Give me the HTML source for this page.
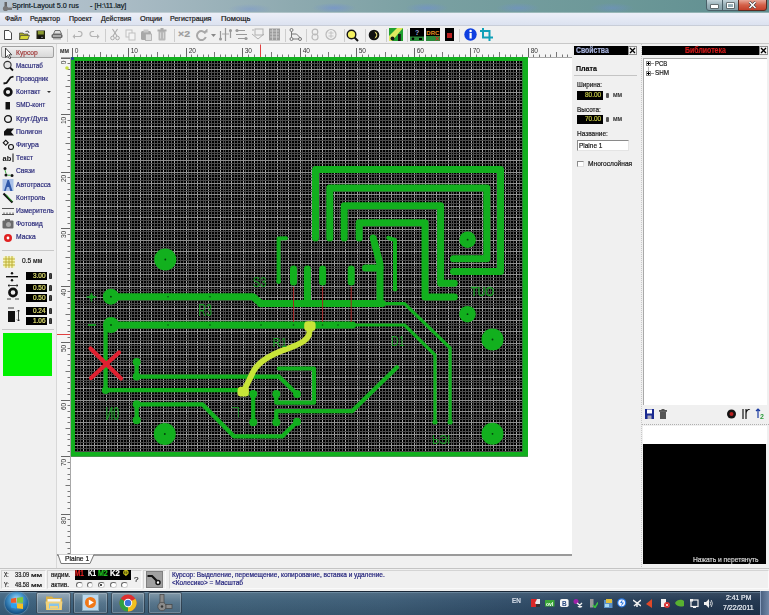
<!DOCTYPE html><html><head><meta charset="utf-8"><style>
*{margin:0;padding:0;box-sizing:border-box}
html,body{width:769px;height:615px;overflow:hidden;background:#f0f0f0;font-family:"Liberation Sans",sans-serif;}
.a{position:absolute}
.t{position:absolute;white-space:nowrap;line-height:1;-webkit-text-stroke:0.2px currentColor}
svg{display:block}
</style></head><body><div id="root" style="position:absolute;left:0;top:0;width:769px;height:615px;overflow:hidden;filter:blur(0.35px)">
<div class="a" style="left:0;top:0;width:769px;height:13px;background:linear-gradient(90deg,#b6c4d0 0%,#abbcc6 15%,#8eaab0 38%,#7aa0a2 55%,#6c9898 80%,#5f8e90 100%)"></div>
<div class="a" style="left:0;top:0;width:769px;height:12px;background:radial-gradient(ellipse 22px 5px at 334px 8px,rgba(110,140,220,.55),transparent),radial-gradient(ellipse 22px 5px at 427px 8px,rgba(110,140,220,.5),transparent),radial-gradient(ellipse 22px 5px at 518px 8px,rgba(110,140,220,.45),transparent),radial-gradient(ellipse 22px 5px at 612px 8px,rgba(110,140,220,.4),transparent),radial-gradient(ellipse 22px 5px at 250px 9px,rgba(110,140,220,.35),transparent)"></div>
<div class="a" style="left:0;top:12px;width:769px;height:1px;background:rgba(255,255,255,.3)"></div>
<div class="a" style="left:1px;top:2px;width:12px;height:10px"><svg width="12" height="10" viewBox="0 0 12 10"><rect x="3.5" y="0" width="2.5" height="5" fill="#666"/><circle cx="4.5" cy="6.5" r="2.6" fill="#777"/><rect x="6" y="5.5" width="5" height="2.5" fill="#777"/></svg></div>
<div class="t" style="left:12.40px;top:2.03px;font-size:7.80px;color:#0e1a24;transform:scaleX(0.923);transform-origin:0 0;">Sprint-Layout 5.0 rus</div>
<div class="t" style="left:90.10px;top:2.03px;font-size:7.80px;color:#0e1a24;transform:scaleX(0.926);transform-origin:0 0;">- [H:\11.lay]</div>
<div class="a" style="left:705.5px;top:-1px;width:17px;height:11.5px;border:1px solid #4a6068;border-radius:0 0 0 3px;background:linear-gradient(180deg,#c4d4da,#98b0b8 50%,#85a0a8)"></div>
<div class="a" style="left:710.5px;top:5px;width:7px;height:2.5px;background:#fff;box-shadow:0 0 0 .6px #444"></div>
<div class="a" style="left:721.5px;top:-1px;width:17px;height:11.5px;border:1px solid #4a6068;background:linear-gradient(180deg,#c4d4da,#98b0b8 50%,#85a0a8)"></div>
<div class="a" style="left:726.5px;top:2.5px;width:7px;height:5.5px;border:1.4px solid #fff;box-shadow:0 0 0 .6px #444"></div>
<div class="a" style="left:737.5px;top:-1px;width:29.5px;height:11.5px;border:1px solid #5a2a20;border-radius:0 0 3px 0;background:linear-gradient(180deg,#e8a898,#d46048 50%,#c4402a)"></div>
<div class="a" style="left:747px;top:1px;width:11px;height:8px"><svg width="11" height="8"><path d="M2.5 1l6 6M8.5 1l-6 6" stroke="#333" stroke-width="2.6"/><path d="M2.5 1l6 6M8.5 1l-6 6" stroke="#fff" stroke-width="1.6"/></svg></div>
<div class="a" style="left:0;top:13px;width:769px;height:13px;background:linear-gradient(180deg,#eceff8,#dce2f0);border-bottom:1px solid #c8cdd8"></div>
<div class="t" style="left:4.60px;top:14.96px;font-size:7.40px;color:#151515;transform:scaleX(0.929);transform-origin:0 0;">Файл</div>
<div class="t" style="left:30.00px;top:14.96px;font-size:7.40px;color:#151515;transform:scaleX(0.945);transform-origin:0 0;">Редактор</div>
<div class="t" style="left:68.80px;top:14.96px;font-size:7.40px;color:#151515;transform:scaleX(0.948);transform-origin:0 0;">Проект</div>
<div class="t" style="left:100.70px;top:14.96px;font-size:7.40px;color:#151515;transform:scaleX(0.938);transform-origin:0 0;">Действия</div>
<div class="t" style="left:140.00px;top:14.96px;font-size:7.40px;color:#151515;">Опции</div>
<div class="t" style="left:170.40px;top:14.96px;font-size:7.40px;color:#151515;transform:scaleX(0.959);transform-origin:0 0;">Регистрация</div>
<div class="t" style="left:220.70px;top:14.96px;font-size:7.40px;color:#151515;transform:scaleX(1.032);transform-origin:0 0;">Помощь</div>
<div class="a" style="left:0;top:26px;width:769px;height:17.5px;background:#f0f0f0"></div>
<div class="a" style="left:0;top:43px;width:769px;height:1px;background:#c8c8c8"></div>
<div class="a" style="left:66.5px;top:28.5px;width:1px;height:13px;background:#cdcdcd"></div>
<div class="a" style="left:104.5px;top:28.5px;width:1px;height:13px;background:#cdcdcd"></div>
<div class="a" style="left:173.5px;top:28.5px;width:1px;height:13px;background:#cdcdcd"></div>
<div class="a" style="left:285px;top:28.5px;width:1px;height:13px;background:#cdcdcd"></div>
<div class="a" style="left:306px;top:28.5px;width:1px;height:13px;background:#cdcdcd"></div>
<div class="a" style="left:343.5px;top:28.5px;width:1px;height:13px;background:#cdcdcd"></div>
<div class="a" style="left:364.5px;top:28.5px;width:1px;height:13px;background:#cdcdcd"></div>
<div class="a" style="left:385.5px;top:28.5px;width:1px;height:13px;background:#cdcdcd"></div>
<div class="a" style="left:406.5px;top:28.5px;width:1px;height:13px;background:#cdcdcd"></div>
<div class="a" style="left:459px;top:28.5px;width:1px;height:13px;background:#cdcdcd"></div>
<div class="a" style="left:3px;top:30px;width:10px;height:10px"><svg width="10" height="10" viewBox="0 0 10 10"><path d="M1.5 .5h4.5l2.5 2.5v6.5h-7z" fill="#fff" stroke="#333" stroke-width=".9"/></svg></div>
<div class="a" style="left:18.5px;top:29.5px;width:11px;height:10px"><svg width="11" height="10" viewBox="0 0 11 10"><path d="M0.5 3h3.5l1 1h4v5.5h-8.5z" fill="#a8a828" stroke="#444" stroke-width=".7"/><path d="M1.5 5.5h9l-1.8 4h-8.2z" fill="#d8d838" stroke="#444" stroke-width=".7"/><path d="M6.5 1.5l2.5-.5 1 2" fill="none" stroke="#333" stroke-width=".8"/></svg></div>
<div class="a" style="left:35.5px;top:30px;width:10px;height:10px"><svg width="10" height="10" viewBox="0 0 10 10"><rect x=".5" y=".5" width="8.5" height="8.5" fill="#202010"/><rect x="1.8" y="1" width="6" height="3.5" fill="#8a9a30"/><rect x="2.5" y="6" width="4.5" height="3" fill="#111"/><rect x="5.5" y="6.8" width="1" height="1.2" fill="#ddd"/></svg></div>
<div class="a" style="left:51px;top:29.5px;width:12px;height:10px"><svg width="12" height="10" viewBox="0 0 12 10"><path d="M2.5 4l1.5-3.5h5l1.5 3.5z" fill="#ddd" stroke="#555" stroke-width=".8"/><rect x="0.5" y="4" width="11" height="4" rx="1.5" fill="#666"/><rect x="2" y="5.5" width="8" height="1" fill="#eee"/><rect x="2" y="8" width="8" height="1.5" fill="#aaa"/></svg></div>
<div class="a" style="left:72px;top:30px;width:11px;height:10px"><svg width="11" height="10" viewBox="0 0 11 10"><path d="M2.5 6.5 h5 a2.5 2.5 0 0 0 0 -5 h-1.5" fill="none" stroke="#b4b4b4" stroke-width="1.2"/><path d="M0.5 6.5l2.5-2.5v5z" fill="#b4b4b4"/></svg></div>
<div class="a" style="left:89px;top:30px;width:11px;height:10px"><svg width="11" height="10" viewBox="0 0 11 10"><path d="M8.5 6.5 h-5 a2.5 2.5 0 0 1 0 -5 h1.5" fill="none" stroke="#b4b4b4" stroke-width="1.2"/><path d="M10.5 6.5l-2.5-2.5v5z" fill="#b4b4b4"/></svg></div>
<div class="a" style="left:110px;top:28px;width:10px;height:13px"><svg width="10" height="13" viewBox="0 0 10 13"><path d="M2.5 1l4.5 7M7.5 1l-4.5 7" stroke="#aaa" stroke-width="1.1"/><circle cx="2.5" cy="10" r="1.8" fill="none" stroke="#aaa"/><circle cx="7.5" cy="10" r="1.8" fill="none" stroke="#aaa"/></svg></div>
<div class="a" style="left:125px;top:29px;width:11px;height:12px"><svg width="11" height="12" viewBox="0 0 11 12"><rect x="1" y="1" width="6" height="7" fill="#f4f4f4" stroke="#c0c0c0"/><rect x="4" y="4" width="6" height="7" fill="#f4f4f4" stroke="#c0c0c0"/></svg></div>
<div class="a" style="left:140px;top:29px;width:12px;height:12px"><svg width="12" height="12" viewBox="0 0 12 12"><rect x="1" y="2" width="10" height="9" rx="1.5" fill="#a8a8a8"/><rect x="3.5" y="0.5" width="5" height="3" fill="#c8c8c8"/><rect x="5.5" y="5" width="6" height="6.5" fill="#ddd" stroke="#aaa" stroke-width=".8"/></svg></div>
<div class="a" style="left:157px;top:28px;width:10px;height:13px"><svg width="10" height="13" viewBox="0 0 10 13"><rect x="1.5" y="3" width="7" height="9.5" rx="1" fill="#b8b8b8"/><rect x="0.5" y="1.5" width="9" height="2" fill="#aaa"/><rect x="3.5" y="0" width="3" height="2" fill="#aaa"/><path d="M3.5 4.5v6M6.5 4.5v6" stroke="#ddd" stroke-width=".8"/></svg></div>
<div class="t" style="left:177.50px;top:29.96px;font-size:9.00px;color:#9c9c9c;font-weight:bold;transform:scaleX(1.169);transform-origin:0 0;">×2</div>
<div class="a" style="left:195px;top:29px;width:13px;height:12px"><svg width="13" height="12" viewBox="0 0 13 12"><path d="M10.5 4.5A4.5 4.5 0 1 0 10.8 8" fill="none" stroke="#a8a8a8" stroke-width="2"/><path d="M8 3.5h4.5v-4z" fill="#a8a8a8"/></svg></div>
<div class="a" style="left:211px;top:33.5px;width:6px;height:4px"><svg width="6" height="4" viewBox="0 0 6 4"><path d="M0 0h5l-2.5 3z" fill="#888"/></svg></div>
<div class="a" style="left:219px;top:28px;width:13px;height:13px"><svg width="13" height="13" viewBox="0 0 13 13"><path d="M1.5 3v8M11.5 2v8M6.5 0v13" stroke="#999" stroke-width="1.2"/><circle cx="1.5" cy="11" r="1.5" fill="#999"/><circle cx="11.5" cy="2.5" r="1.5" fill="#999"/><path d="M3 6h7" stroke="#999" stroke-width=".8"/></svg></div>
<div class="a" style="left:235px;top:28px;width:13px;height:13px"><svg width="13" height="13" viewBox="0 0 13 13"><path d="M3 2.5h7M3 10.5h7M1 6.5h11" stroke="#999" stroke-width="1.2"/><circle cx="2" cy="2.5" r="1.6" fill="#999"/><circle cx="11" cy="10.5" r="1.6" fill="#999"/></svg></div>
<div class="a" style="left:251px;top:28px;width:14px;height:13px"><svg width="14" height="13" viewBox="0 0 14 13"><rect x="4" y="1" width="8" height="6" fill="none" stroke="#b0b0b0"/><path d="M1 6l6 5 6-5" fill="none" stroke="#b0b0b0"/><path d="M1 2h2" stroke="#b0b0b0"/></svg></div>
<div class="a" style="left:268px;top:28px;width:13px;height:13px"><svg width="13" height="13" viewBox="0 0 13 13"><rect x="1" y="0.5" width="11" height="12" fill="#9c9c9c"/><path d="M2 3h9M2 6h9M2 9h9M4.5 1v11M8.5 1v11" stroke="#d0d0d0" stroke-width=".8"/></svg></div>
<div class="a" style="left:289px;top:28px;width:13px;height:13px"><svg width="13" height="13" viewBox="0 0 13 13"><circle cx="2.5" cy="2" r="1.5" fill="none" stroke="#777"/><circle cx="2.5" cy="11" r="1.5" fill="none" stroke="#777"/><circle cx="11" cy="11" r="1.5" fill="none" stroke="#777"/><path d="M2.5 3.5v6M4 11h5.5M2.5 6h5l3.5 3.5" fill="none" stroke="#777"/></svg></div>
<div class="a" style="left:309px;top:28px;width:12px;height:13px"><svg width="12" height="13" viewBox="0 0 12 13"><circle cx="6" cy="4" r="2.8" fill="none" stroke="#bbb" stroke-width="1.2"/><circle cx="6" cy="9" r="3" fill="none" stroke="#bbb" stroke-width="1.2"/></svg></div>
<div class="a" style="left:325px;top:28px;width:12px;height:13px"><svg width="12" height="13" viewBox="0 0 12 13"><circle cx="6" cy="6.5" r="5" fill="none" stroke="#bbb" stroke-width="1.2"/><path d="M3.5 5h5M3.5 8h5M6 3v7" stroke="#bbb" stroke-width=".8"/></svg></div>
<div class="a" style="left:346px;top:28.5px;width:13px;height:13px"><svg width="13" height="13" viewBox="0 0 13 13"><circle cx="5.5" cy="5.5" r="4.3" fill="#f4f060" stroke="#141414" stroke-width="1.4"/><path d="M8.5 8.5l3.5 3.5" stroke="#141414" stroke-width="2"/></svg></div>
<div class="a" style="left:368px;top:29px;width:12px;height:12px"><svg width="12" height="12" viewBox="0 0 12 12"><circle cx="6" cy="6" r="5.3" fill="#111"/><path d="M6.5 2.5 A3.6 3.6 0 0 1 6.5 9.5 L8.5 6z" fill="#f4e878"/></svg></div>
<div class="a" style="left:389px;top:28px;width:14px;height:13px"><svg width="14" height="13" viewBox="0 0 14 13"><rect x="0" y="0" width="14" height="13" fill="#20a030"/><path d="M0 8l8-8h6L3 13H0z" fill="#e0e860"/><rect x="9" y="6" width="2.8" height="7" fill="#141414"/><circle cx="3.5" cy="10.5" r="2" fill="#141414"/></svg></div>
<div class="a" style="left:410px;top:28px;width:14px;height:13px"><svg width="14" height="13" viewBox="0 0 14 13"><rect x="0" y="0" width="14" height="13" fill="#000"/><rect x="0" y="8.5" width="14" height="4.5" fill="#2a8a3a"/><text x="5" y="7" font-size="7" fill="#9ad" font-family="Liberation Sans" font-weight="bold">?</text><circle cx="3" cy="10.8" r="1.3" fill="#000"/><rect x="9" y="10" width="3" height="2" fill="#000"/></svg></div>
<div class="a" style="left:426px;top:28px;width:14px;height:13px"><svg width="14" height="13" viewBox="0 0 14 13"><rect x="0" y="0" width="14" height="13" fill="#000"/><text x="0.3" y="6.5" font-size="6" fill="#e89020" font-family="Liberation Sans" font-weight="bold">DRC</text><rect x="0" y="8" width="14" height="5" fill="#2a8a3a"/><path d="M9.5 8.5l3.5 4M13 8.5l-3.5 4" stroke="#e02020"/></svg></div>
<div class="a" style="left:445px;top:28px;width:9px;height:13px"><svg width="9" height="13" viewBox="0 0 9 13"><rect x="0" y="0" width="9" height="13" fill="#000"/><rect x="2" y="5" width="5" height="5" fill="#b82020"/></svg></div>
<div class="a" style="left:464px;top:28px;width:13px;height:13px"><svg width="13" height="13" viewBox="0 0 13 13"><circle cx="6.5" cy="6.5" r="6.2" fill="#1040e0"/><rect x="5.5" y="5" width="2.2" height="5.5" fill="#fff"/><circle cx="6.6" cy="3" r="1.3" fill="#fff"/></svg></div>
<div class="a" style="left:480px;top:28px;width:13px;height:13px"><svg width="13" height="13" viewBox="0 0 13 13"><path d="M3 0v9.5h10M0 3h9.5v10" fill="none" stroke="#10a0b8" stroke-width="2"/></svg></div>
<div class="a" style="left:56px;top:44px;width:1px;height:524px;background:#d8d8d8"></div>
<div class="a" style="left:1.3px;top:46.4px;width:52.7px;height:11.6px;border:1px solid #a0a0a0;border-radius:2px;background:linear-gradient(180deg,#f0f0f0,#d8d8d8)"></div>
<div class="t" style="left:16.10px;top:48.66px;font-size:7.40px;color:#a03838;transform:scaleX(0.906);transform-origin:0 0;">Курсор</div>
<div class="t" style="left:16.10px;top:61.86px;font-size:7.40px;color:#2a2a7a;transform:scaleX(0.847);transform-origin:0 0;">Масштаб</div>
<div class="t" style="left:16.10px;top:75.06px;font-size:7.40px;color:#2a2a7a;transform:scaleX(0.867);transform-origin:0 0;">Проводник</div>
<div class="t" style="left:16.10px;top:88.26px;font-size:7.40px;color:#2a2a7a;transform:scaleX(0.912);transform-origin:0 0;">Контакт</div>
<div class="t" style="left:16.10px;top:101.46px;font-size:7.40px;color:#2a2a7a;transform:scaleX(0.866);transform-origin:0 0;">SMD-конт</div>
<div class="t" style="left:16.10px;top:114.66px;font-size:7.40px;color:#2a2a7a;transform:scaleX(0.981);transform-origin:0 0;">Круг/Дуга</div>
<div class="t" style="left:16.10px;top:127.86px;font-size:7.40px;color:#2a2a7a;transform:scaleX(0.910);transform-origin:0 0;">Полигон</div>
<div class="t" style="left:16.10px;top:141.06px;font-size:7.40px;color:#2a2a7a;transform:scaleX(0.942);transform-origin:0 0;">Фигура</div>
<div class="t" style="left:16.10px;top:154.26px;font-size:7.40px;color:#2a2a7a;transform:scaleX(0.912);transform-origin:0 0;">Текст</div>
<div class="t" style="left:16.10px;top:167.46px;font-size:7.40px;color:#2a2a7a;transform:scaleX(0.912);transform-origin:0 0;">Связи</div>
<div class="t" style="left:16.10px;top:180.66px;font-size:7.40px;color:#2a2a7a;transform:scaleX(0.890);transform-origin:0 0;">Автотрасса</div>
<div class="t" style="left:16.10px;top:193.86px;font-size:7.40px;color:#2a2a7a;transform:scaleX(0.912);transform-origin:0 0;">Контроль</div>
<div class="t" style="left:16.10px;top:207.06px;font-size:7.40px;color:#2a2a7a;transform:scaleX(0.913);transform-origin:0 0;">Измеритель</div>
<div class="t" style="left:16.10px;top:220.26px;font-size:7.40px;color:#2a2a7a;transform:scaleX(0.912);transform-origin:0 0;">Фотовид</div>
<div class="t" style="left:16.10px;top:233.46px;font-size:7.40px;color:#2a2a7a;transform:scaleX(0.912);transform-origin:0 0;">Маска</div>
<div class="a" style="left:2px;top:46.8px;width:12px;height:12px"><svg width="12" height="12" viewBox="0 0 12 12"><path d="M3.5 1v9.5l2-2 2 3.3 1.4-.8-2-3.2h2.8z" fill="#fff" stroke="#333" stroke-width=".9"/></svg></div>
<div class="a" style="left:2px;top:60.0px;width:12px;height:12px"><svg width="12" height="12" viewBox="0 0 12 12"><circle cx="5.5" cy="5" r="3.6" fill="#e4e4e4" stroke="#333" stroke-width="1.1"/><path d="M8 7.5l3 3" stroke="#111" stroke-width="1.8"/></svg></div>
<div class="a" style="left:2px;top:73.2px;width:12px;height:12px"><svg width="12" height="12" viewBox="0 0 12 12"><path d="M1.5 10.5l3-.5 4-5.5 3-1" fill="none" stroke="#111" stroke-width="1.8"/></svg></div>
<div class="a" style="left:2px;top:86.4px;width:12px;height:12px"><svg width="12" height="12" viewBox="0 0 12 12"><circle cx="6" cy="6" r="3.4" fill="none" stroke="#111" stroke-width="2.6"/></svg></div>
<div class="a" style="left:47px;top:90.8px;width:0;height:0;border-left:2.5px solid transparent;border-right:2.5px solid transparent;border-top:2.5px solid #333"></div>
<div class="a" style="left:2px;top:99.6px;width:12px;height:12px"><svg width="12" height="12" viewBox="0 0 12 12"><rect x="3.5" y="2" width="4.5" height="7.5" fill="#111"/></svg></div>
<div class="a" style="left:2px;top:112.8px;width:12px;height:12px"><svg width="12" height="12" viewBox="0 0 12 12"><circle cx="6" cy="6" r="3.4" fill="none" stroke="#111" stroke-width="1.3"/></svg></div>
<div class="a" style="left:2px;top:126.0px;width:12px;height:12px"><svg width="12" height="12" viewBox="0 0 12 12"><path d="M2 9.5V5.5l3-3h7l-3 3.5 3 3.5z" fill="#111"/></svg></div>
<div class="a" style="left:2px;top:139.2px;width:12px;height:12px"><svg width="12" height="12" viewBox="0 0 12 12"><rect x="2" y="2" width="3.5" height="3.5" fill="none" stroke="#141414" stroke-width="1.1" transform="rotate(45 3.75 3.75)"/><circle cx="9" cy="8" r="2.5" fill="none" stroke="#141414" stroke-width="1.1"/></svg></div>
<div class="a" style="left:2px;top:152.4px;width:13px;height:12px"><svg width="13" height="12" viewBox="0 0 13 12"><text x="0.5" y="9" font-size="7.5" font-weight="bold" fill="#111" font-family="Liberation Sans">ab</text><rect x="10.5" y="1.5" width="1" height="8.5" fill="#111"/></svg></div>
<div class="a" style="left:2px;top:165.6px;width:12px;height:12px"><svg width="12" height="12" viewBox="0 0 12 12"><circle cx="3" cy="2.5" r="1.5" fill="#141414"/><circle cx="4" cy="9" r="1.5" fill="#141414"/><circle cx="10" cy="9.5" r="1.5" fill="#141414"/><path d="M3 4l1 3.5M5.5 9.2h3" stroke="#3a3" stroke-width=".9"/></svg></div>
<div class="a" style="left:2px;top:178.8px;width:12px;height:12px"><svg width="12" height="12" viewBox="0 0 12 12"><rect x="0.5" y="0" width="11" height="12" fill="#a8c0e8"/><path d="M2 12l3.5-11h1.5l3.5 11h-2.2l-1.2-4h-2.2l-1.2 4z" fill="#3058a8"/></svg></div>
<div class="a" style="left:2px;top:192.0px;width:12px;height:12px"><svg width="12" height="12" viewBox="0 0 12 12"><path d="M1.5 1.5l9 9" stroke="#111" stroke-width="2.2"/><path d="M4 2.5l6 7" stroke="#2a2" stroke-width="1"/></svg></div>
<div class="a" style="left:2px;top:205.2px;width:12px;height:12px"><svg width="12" height="12" viewBox="0 0 12 12"><path d="M0 3.5h12" stroke="#444" stroke-width=".9"/><path d="M0 9.5h12M2 7.5v2M5 7.5v2M8 7.5v2M11 7.5v2" stroke="#444" stroke-width=".9"/></svg></div>
<div class="a" style="left:2px;top:218.4px;width:12px;height:12px"><svg width="12" height="12" viewBox="0 0 12 12"><rect x="0.5" y="2.5" width="11" height="8" rx="1" fill="#6a6a6a"/><rect x="3" y="1" width="5" height="2" fill="#6a6a6a"/><circle cx="6.5" cy="6.5" r="2.5" fill="#aaa"/></svg></div>
<div class="a" style="left:2px;top:231.6px;width:12px;height:12px"><svg width="12" height="12" viewBox="0 0 12 12"><circle cx="6" cy="6" r="4" fill="#e02020"/><circle cx="6" cy="6" r="1.4" fill="#fff"/></svg></div>
<div class="a" style="left:2px;top:250px;width:52px;height:1px;background:#c8c8c8"></div>
<div class="a" style="left:2px;top:328.5px;width:52px;height:1px;background:#c8c8c8"></div>
<div class="a" style="left:3px;top:255.5px;width:12px;height:12px"><svg width="12" height="12" viewBox="0 0 12 12"><rect x="0.5" y="0.5" width="11" height="11" fill="#f6f4a8"/><path d="M0 3h12M0 6h12M0 9h12M3 0v12M6 0v12M9 0v12" stroke="#b8a830" stroke-width=".9"/></svg></div>
<div class="t" style="left:22.00px;top:257.04px;font-size:7.60px;color:#141414;transform:scaleX(0.878);transform-origin:0 0;">0.5 мм</div>
<div class="a" style="left:6px;top:270.5px;width:12px;height:11px"><svg width="12" height="11" viewBox="0 0 12 11"><rect x="0" y="5" width="12" height="1.4" fill="#111"/><circle cx="6" cy="2.2" r="1.2" fill="#111"/><circle cx="6" cy="9.2" r="1.2" fill="#111"/></svg></div>
<div class="a" style="left:7px;top:283.5px;width:12px;height:17px"><svg width="12" height="17" viewBox="0 0 12 17"><path d="M1 1.5h10M1 1.5l1.5-1.2M1 1.5l1.5 1.2M11 1.5l-1.5-1.2M11 1.5l-1.5 1.2" stroke="#111" stroke-width=".8"/><circle cx="6" cy="8.5" r="3.6" fill="none" stroke="#111" stroke-width="2.6"/><path d="M0 15h4M8 15h4" stroke="#111" stroke-width=".8"/></svg></div>
<div class="a" style="left:8px;top:306px;width:12px;height:16px"><svg width="12" height="16" viewBox="0 0 12 16"><rect x="0" y="5" width="7" height="11" fill="#111"/><path d="M0 2h6" stroke="#111" stroke-width=".8"/><path d="M10.5 4v11M9 5.5l1.5-1.5 1.5 1.5M9 13.5l1.5 1.5 1.5-1.5" fill="none" stroke="#111" stroke-width=".8"/></svg></div>
<div class="a" style="left:25.7px;top:271.8px;width:21.5px;height:8.399999999999977px;background:#000"></div>
<div class="t" style="left:32.50px;top:272.16px;font-size:7.40px;color:#e4e470;transform:scaleX(0.868);transform-origin:0 0;">3.00</div>
<div class="a" style="left:49.3px;top:273.2px;width:3px;height:5.6px;background:#444;border-radius:1.5px;box-shadow:inset 0 0 0 .7px #222"></div>
<div class="a" style="left:25.7px;top:284px;width:21.5px;height:8.399999999999977px;background:#000"></div>
<div class="t" style="left:32.50px;top:284.36px;font-size:7.40px;color:#e4e470;transform:scaleX(0.868);transform-origin:0 0;">0.50</div>
<div class="a" style="left:49.3px;top:285.4px;width:3px;height:5.6px;background:#444;border-radius:1.5px;box-shadow:inset 0 0 0 .7px #222"></div>
<div class="a" style="left:25.7px;top:293.8px;width:21.5px;height:8.199999999999989px;background:#000"></div>
<div class="t" style="left:32.50px;top:294.06px;font-size:7.40px;color:#e4e470;transform:scaleX(0.868);transform-origin:0 0;">0.50</div>
<div class="a" style="left:49.3px;top:295.09999999999997px;width:3px;height:5.6px;background:#444;border-radius:1.5px;box-shadow:inset 0 0 0 .7px #222"></div>
<div class="a" style="left:25.7px;top:306.8px;width:21.5px;height:8.199999999999989px;background:#000"></div>
<div class="t" style="left:32.50px;top:307.06px;font-size:7.40px;color:#e4e470;transform:scaleX(0.868);transform-origin:0 0;">0.24</div>
<div class="a" style="left:49.3px;top:308.09999999999997px;width:3px;height:5.6px;background:#444;border-radius:1.5px;box-shadow:inset 0 0 0 .7px #222"></div>
<div class="a" style="left:25.7px;top:316.5px;width:21.5px;height:8.5px;background:#000"></div>
<div class="t" style="left:32.50px;top:316.91px;font-size:7.40px;color:#e4e470;transform:scaleX(0.868);transform-origin:0 0;">1.06</div>
<div class="a" style="left:49.3px;top:317.95px;width:3px;height:5.6px;background:#444;border-radius:1.5px;box-shadow:inset 0 0 0 .7px #222"></div>
<div class="a" style="left:3px;top:333px;width:48.5px;height:42.7px;background:#00f000"></div>
<div class="a" style="left:57px;top:44px;width:515px;height:510.5px;background:#fff"></div>
<div class="a" style="left:57px;top:44px;width:515px;height:14px;background:#f5f5f5"></div>
<div class="a" style="left:57px;top:44px;width:14px;height:510.5px;background:#f5f5f5"></div>
<div class="t" style="left:60.00px;top:47.86px;font-size:6.50px;color:#333;">мм</div>
<svg class="a" style="left:0;top:0" width="769" height="615"><line x1="61" y1="57.5" x2="572" y2="57.5" stroke="#a8a8a8" stroke-width="1"/><line x1="70.5" y1="58" x2="70.5" y2="554" stroke="#a8a8a8" stroke-width="1"/><line x1="72.5" y1="48" x2="72.5" y2="57" stroke="#666" stroke-width="1"/><text x="74.7" y="53.0" font-size="6.6" fill="#333" font-family="Liberation Sans">0</text><line x1="77.5" y1="54.5" x2="77.5" y2="57" stroke="#777" stroke-width="1"/><line x1="83.5" y1="54.5" x2="83.5" y2="57" stroke="#777" stroke-width="1"/><line x1="89.5" y1="54.5" x2="89.5" y2="57" stroke="#777" stroke-width="1"/><line x1="94.5" y1="54.5" x2="94.5" y2="57" stroke="#777" stroke-width="1"/><line x1="100.5" y1="52" x2="100.5" y2="57" stroke="#777" stroke-width="1"/><line x1="106.5" y1="54.5" x2="106.5" y2="57" stroke="#777" stroke-width="1"/><line x1="111.5" y1="54.5" x2="111.5" y2="57" stroke="#777" stroke-width="1"/><line x1="117.5" y1="54.5" x2="117.5" y2="57" stroke="#777" stroke-width="1"/><line x1="123.5" y1="54.5" x2="123.5" y2="57" stroke="#777" stroke-width="1"/><line x1="128.5" y1="48" x2="128.5" y2="57" stroke="#666" stroke-width="1"/><text x="130.7" y="53.0" font-size="6.6" fill="#333" font-family="Liberation Sans">10</text><line x1="134.5" y1="54.5" x2="134.5" y2="57" stroke="#777" stroke-width="1"/><line x1="140.5" y1="54.5" x2="140.5" y2="57" stroke="#777" stroke-width="1"/><line x1="146.5" y1="54.5" x2="146.5" y2="57" stroke="#777" stroke-width="1"/><line x1="151.5" y1="54.5" x2="151.5" y2="57" stroke="#777" stroke-width="1"/><line x1="157.5" y1="52" x2="157.5" y2="57" stroke="#777" stroke-width="1"/><line x1="163.5" y1="54.5" x2="163.5" y2="57" stroke="#777" stroke-width="1"/><line x1="168.5" y1="54.5" x2="168.5" y2="57" stroke="#777" stroke-width="1"/><line x1="174.5" y1="54.5" x2="174.5" y2="57" stroke="#777" stroke-width="1"/><line x1="180.5" y1="54.5" x2="180.5" y2="57" stroke="#777" stroke-width="1"/><line x1="186.5" y1="48" x2="186.5" y2="57" stroke="#666" stroke-width="1"/><text x="188.7" y="53.0" font-size="6.6" fill="#333" font-family="Liberation Sans">20</text><line x1="191.5" y1="54.5" x2="191.5" y2="57" stroke="#777" stroke-width="1"/><line x1="197.5" y1="54.5" x2="197.5" y2="57" stroke="#777" stroke-width="1"/><line x1="203.5" y1="54.5" x2="203.5" y2="57" stroke="#777" stroke-width="1"/><line x1="208.5" y1="54.5" x2="208.5" y2="57" stroke="#777" stroke-width="1"/><line x1="214.5" y1="52" x2="214.5" y2="57" stroke="#777" stroke-width="1"/><line x1="220.5" y1="54.5" x2="220.5" y2="57" stroke="#777" stroke-width="1"/><line x1="225.5" y1="54.5" x2="225.5" y2="57" stroke="#777" stroke-width="1"/><line x1="231.5" y1="54.5" x2="231.5" y2="57" stroke="#777" stroke-width="1"/><line x1="237.5" y1="54.5" x2="237.5" y2="57" stroke="#777" stroke-width="1"/><line x1="242.5" y1="48" x2="242.5" y2="57" stroke="#666" stroke-width="1"/><text x="244.7" y="53.0" font-size="6.6" fill="#333" font-family="Liberation Sans">30</text><line x1="248.5" y1="54.5" x2="248.5" y2="57" stroke="#777" stroke-width="1"/><line x1="254.5" y1="54.5" x2="254.5" y2="57" stroke="#777" stroke-width="1"/><line x1="260.5" y1="54.5" x2="260.5" y2="57" stroke="#777" stroke-width="1"/><line x1="265.5" y1="54.5" x2="265.5" y2="57" stroke="#777" stroke-width="1"/><line x1="271.5" y1="52" x2="271.5" y2="57" stroke="#777" stroke-width="1"/><line x1="277.5" y1="54.5" x2="277.5" y2="57" stroke="#777" stroke-width="1"/><line x1="282.5" y1="54.5" x2="282.5" y2="57" stroke="#777" stroke-width="1"/><line x1="288.5" y1="54.5" x2="288.5" y2="57" stroke="#777" stroke-width="1"/><line x1="294.5" y1="54.5" x2="294.5" y2="57" stroke="#777" stroke-width="1"/><line x1="300.5" y1="48" x2="300.5" y2="57" stroke="#666" stroke-width="1"/><text x="302.7" y="53.0" font-size="6.6" fill="#333" font-family="Liberation Sans">40</text><line x1="305.5" y1="54.5" x2="305.5" y2="57" stroke="#777" stroke-width="1"/><line x1="311.5" y1="54.5" x2="311.5" y2="57" stroke="#777" stroke-width="1"/><line x1="317.5" y1="54.5" x2="317.5" y2="57" stroke="#777" stroke-width="1"/><line x1="322.5" y1="54.5" x2="322.5" y2="57" stroke="#777" stroke-width="1"/><line x1="328.5" y1="52" x2="328.5" y2="57" stroke="#777" stroke-width="1"/><line x1="334.5" y1="54.5" x2="334.5" y2="57" stroke="#777" stroke-width="1"/><line x1="339.5" y1="54.5" x2="339.5" y2="57" stroke="#777" stroke-width="1"/><line x1="345.5" y1="54.5" x2="345.5" y2="57" stroke="#777" stroke-width="1"/><line x1="351.5" y1="54.5" x2="351.5" y2="57" stroke="#777" stroke-width="1"/><line x1="356.5" y1="48" x2="356.5" y2="57" stroke="#666" stroke-width="1"/><text x="358.7" y="53.0" font-size="6.6" fill="#333" font-family="Liberation Sans">50</text><line x1="362.5" y1="54.5" x2="362.5" y2="57" stroke="#777" stroke-width="1"/><line x1="368.5" y1="54.5" x2="368.5" y2="57" stroke="#777" stroke-width="1"/><line x1="374.5" y1="54.5" x2="374.5" y2="57" stroke="#777" stroke-width="1"/><line x1="379.5" y1="54.5" x2="379.5" y2="57" stroke="#777" stroke-width="1"/><line x1="385.5" y1="52" x2="385.5" y2="57" stroke="#777" stroke-width="1"/><line x1="391.5" y1="54.5" x2="391.5" y2="57" stroke="#777" stroke-width="1"/><line x1="396.5" y1="54.5" x2="396.5" y2="57" stroke="#777" stroke-width="1"/><line x1="402.5" y1="54.5" x2="402.5" y2="57" stroke="#777" stroke-width="1"/><line x1="408.5" y1="54.5" x2="408.5" y2="57" stroke="#777" stroke-width="1"/><line x1="414.5" y1="48" x2="414.5" y2="57" stroke="#666" stroke-width="1"/><text x="416.7" y="53.0" font-size="6.6" fill="#333" font-family="Liberation Sans">60</text><line x1="419.5" y1="54.5" x2="419.5" y2="57" stroke="#777" stroke-width="1"/><line x1="425.5" y1="54.5" x2="425.5" y2="57" stroke="#777" stroke-width="1"/><line x1="431.5" y1="54.5" x2="431.5" y2="57" stroke="#777" stroke-width="1"/><line x1="436.5" y1="54.5" x2="436.5" y2="57" stroke="#777" stroke-width="1"/><line x1="442.5" y1="52" x2="442.5" y2="57" stroke="#777" stroke-width="1"/><line x1="448.5" y1="54.5" x2="448.5" y2="57" stroke="#777" stroke-width="1"/><line x1="453.5" y1="54.5" x2="453.5" y2="57" stroke="#777" stroke-width="1"/><line x1="459.5" y1="54.5" x2="459.5" y2="57" stroke="#777" stroke-width="1"/><line x1="465.5" y1="54.5" x2="465.5" y2="57" stroke="#777" stroke-width="1"/><line x1="470.5" y1="48" x2="470.5" y2="57" stroke="#666" stroke-width="1"/><text x="472.7" y="53.0" font-size="6.6" fill="#333" font-family="Liberation Sans">70</text><line x1="476.5" y1="54.5" x2="476.5" y2="57" stroke="#777" stroke-width="1"/><line x1="482.5" y1="54.5" x2="482.5" y2="57" stroke="#777" stroke-width="1"/><line x1="488.5" y1="54.5" x2="488.5" y2="57" stroke="#777" stroke-width="1"/><line x1="493.5" y1="54.5" x2="493.5" y2="57" stroke="#777" stroke-width="1"/><line x1="499.5" y1="52" x2="499.5" y2="57" stroke="#777" stroke-width="1"/><line x1="505.5" y1="54.5" x2="505.5" y2="57" stroke="#777" stroke-width="1"/><line x1="510.5" y1="54.5" x2="510.5" y2="57" stroke="#777" stroke-width="1"/><line x1="516.5" y1="54.5" x2="516.5" y2="57" stroke="#777" stroke-width="1"/><line x1="522.5" y1="54.5" x2="522.5" y2="57" stroke="#777" stroke-width="1"/><line x1="528.5" y1="48" x2="528.5" y2="57" stroke="#666" stroke-width="1"/><text x="530.7" y="53.0" font-size="6.6" fill="#333" font-family="Liberation Sans">80</text><line x1="533.5" y1="54.5" x2="533.5" y2="57" stroke="#777" stroke-width="1"/><line x1="539.5" y1="54.5" x2="539.5" y2="57" stroke="#777" stroke-width="1"/><line x1="545.5" y1="54.5" x2="545.5" y2="57" stroke="#777" stroke-width="1"/><line x1="550.5" y1="54.5" x2="550.5" y2="57" stroke="#777" stroke-width="1"/><line x1="556.5" y1="52" x2="556.5" y2="57" stroke="#777" stroke-width="1"/><line x1="562.5" y1="54.5" x2="562.5" y2="57" stroke="#777" stroke-width="1"/><line x1="567.5" y1="54.5" x2="567.5" y2="57" stroke="#777" stroke-width="1"/><line x1="61" y1="58.5" x2="70" y2="58.5" stroke="#666" stroke-width="1"/><text transform="translate(65.8 60.7) rotate(-90)" text-anchor="end" font-size="6.6" fill="#333" font-family="Liberation Sans">0</text><line x1="67.5" y1="63.5" x2="70" y2="63.5" stroke="#777" stroke-width="1"/><line x1="67.5" y1="69.5" x2="70" y2="69.5" stroke="#777" stroke-width="1"/><line x1="67.5" y1="75.5" x2="70" y2="75.5" stroke="#777" stroke-width="1"/><line x1="67.5" y1="80.5" x2="70" y2="80.5" stroke="#777" stroke-width="1"/><line x1="65.5" y1="86.5" x2="70" y2="86.5" stroke="#777" stroke-width="1"/><line x1="67.5" y1="92.5" x2="70" y2="92.5" stroke="#777" stroke-width="1"/><line x1="67.5" y1="97.5" x2="70" y2="97.5" stroke="#777" stroke-width="1"/><line x1="67.5" y1="103.5" x2="70" y2="103.5" stroke="#777" stroke-width="1"/><line x1="67.5" y1="109.5" x2="70" y2="109.5" stroke="#777" stroke-width="1"/><line x1="61" y1="114.5" x2="70" y2="114.5" stroke="#666" stroke-width="1"/><text transform="translate(65.8 116.7) rotate(-90)" text-anchor="end" font-size="6.6" fill="#333" font-family="Liberation Sans">10</text><line x1="67.5" y1="120.5" x2="70" y2="120.5" stroke="#777" stroke-width="1"/><line x1="67.5" y1="126.5" x2="70" y2="126.5" stroke="#777" stroke-width="1"/><line x1="67.5" y1="132.5" x2="70" y2="132.5" stroke="#777" stroke-width="1"/><line x1="67.5" y1="137.5" x2="70" y2="137.5" stroke="#777" stroke-width="1"/><line x1="65.5" y1="143.5" x2="70" y2="143.5" stroke="#777" stroke-width="1"/><line x1="67.5" y1="149.5" x2="70" y2="149.5" stroke="#777" stroke-width="1"/><line x1="67.5" y1="154.5" x2="70" y2="154.5" stroke="#777" stroke-width="1"/><line x1="67.5" y1="160.5" x2="70" y2="160.5" stroke="#777" stroke-width="1"/><line x1="67.5" y1="166.5" x2="70" y2="166.5" stroke="#777" stroke-width="1"/><line x1="61" y1="172.5" x2="70" y2="172.5" stroke="#666" stroke-width="1"/><text transform="translate(65.8 174.7) rotate(-90)" text-anchor="end" font-size="6.6" fill="#333" font-family="Liberation Sans">20</text><line x1="67.5" y1="177.5" x2="70" y2="177.5" stroke="#777" stroke-width="1"/><line x1="67.5" y1="183.5" x2="70" y2="183.5" stroke="#777" stroke-width="1"/><line x1="67.5" y1="189.5" x2="70" y2="189.5" stroke="#777" stroke-width="1"/><line x1="67.5" y1="194.5" x2="70" y2="194.5" stroke="#777" stroke-width="1"/><line x1="65.5" y1="200.5" x2="70" y2="200.5" stroke="#777" stroke-width="1"/><line x1="67.5" y1="206.5" x2="70" y2="206.5" stroke="#777" stroke-width="1"/><line x1="67.5" y1="211.5" x2="70" y2="211.5" stroke="#777" stroke-width="1"/><line x1="67.5" y1="217.5" x2="70" y2="217.5" stroke="#777" stroke-width="1"/><line x1="67.5" y1="223.5" x2="70" y2="223.5" stroke="#777" stroke-width="1"/><line x1="61" y1="228.5" x2="70" y2="228.5" stroke="#666" stroke-width="1"/><text transform="translate(65.8 230.7) rotate(-90)" text-anchor="end" font-size="6.6" fill="#333" font-family="Liberation Sans">30</text><line x1="67.5" y1="234.5" x2="70" y2="234.5" stroke="#777" stroke-width="1"/><line x1="67.5" y1="240.5" x2="70" y2="240.5" stroke="#777" stroke-width="1"/><line x1="67.5" y1="246.5" x2="70" y2="246.5" stroke="#777" stroke-width="1"/><line x1="67.5" y1="251.5" x2="70" y2="251.5" stroke="#777" stroke-width="1"/><line x1="65.5" y1="257.5" x2="70" y2="257.5" stroke="#777" stroke-width="1"/><line x1="67.5" y1="263.5" x2="70" y2="263.5" stroke="#777" stroke-width="1"/><line x1="67.5" y1="268.5" x2="70" y2="268.5" stroke="#777" stroke-width="1"/><line x1="67.5" y1="274.5" x2="70" y2="274.5" stroke="#777" stroke-width="1"/><line x1="67.5" y1="280.5" x2="70" y2="280.5" stroke="#777" stroke-width="1"/><line x1="61" y1="286.5" x2="70" y2="286.5" stroke="#666" stroke-width="1"/><text transform="translate(65.8 288.7) rotate(-90)" text-anchor="end" font-size="6.6" fill="#333" font-family="Liberation Sans">40</text><line x1="67.5" y1="291.5" x2="70" y2="291.5" stroke="#777" stroke-width="1"/><line x1="67.5" y1="297.5" x2="70" y2="297.5" stroke="#777" stroke-width="1"/><line x1="67.5" y1="303.5" x2="70" y2="303.5" stroke="#777" stroke-width="1"/><line x1="67.5" y1="308.5" x2="70" y2="308.5" stroke="#777" stroke-width="1"/><line x1="65.5" y1="314.5" x2="70" y2="314.5" stroke="#777" stroke-width="1"/><line x1="67.5" y1="320.5" x2="70" y2="320.5" stroke="#777" stroke-width="1"/><line x1="67.5" y1="325.5" x2="70" y2="325.5" stroke="#777" stroke-width="1"/><line x1="67.5" y1="331.5" x2="70" y2="331.5" stroke="#777" stroke-width="1"/><line x1="67.5" y1="337.5" x2="70" y2="337.5" stroke="#777" stroke-width="1"/><line x1="61" y1="342.5" x2="70" y2="342.5" stroke="#666" stroke-width="1"/><text transform="translate(65.8 344.7) rotate(-90)" text-anchor="end" font-size="6.6" fill="#333" font-family="Liberation Sans">50</text><line x1="67.5" y1="348.5" x2="70" y2="348.5" stroke="#777" stroke-width="1"/><line x1="67.5" y1="354.5" x2="70" y2="354.5" stroke="#777" stroke-width="1"/><line x1="67.5" y1="360.5" x2="70" y2="360.5" stroke="#777" stroke-width="1"/><line x1="67.5" y1="365.5" x2="70" y2="365.5" stroke="#777" stroke-width="1"/><line x1="65.5" y1="371.5" x2="70" y2="371.5" stroke="#777" stroke-width="1"/><line x1="67.5" y1="377.5" x2="70" y2="377.5" stroke="#777" stroke-width="1"/><line x1="67.5" y1="382.5" x2="70" y2="382.5" stroke="#777" stroke-width="1"/><line x1="67.5" y1="388.5" x2="70" y2="388.5" stroke="#777" stroke-width="1"/><line x1="67.5" y1="394.5" x2="70" y2="394.5" stroke="#777" stroke-width="1"/><line x1="61" y1="400.5" x2="70" y2="400.5" stroke="#666" stroke-width="1"/><text transform="translate(65.8 402.7) rotate(-90)" text-anchor="end" font-size="6.6" fill="#333" font-family="Liberation Sans">60</text><line x1="67.5" y1="405.5" x2="70" y2="405.5" stroke="#777" stroke-width="1"/><line x1="67.5" y1="411.5" x2="70" y2="411.5" stroke="#777" stroke-width="1"/><line x1="67.5" y1="417.5" x2="70" y2="417.5" stroke="#777" stroke-width="1"/><line x1="67.5" y1="422.5" x2="70" y2="422.5" stroke="#777" stroke-width="1"/><line x1="65.5" y1="428.5" x2="70" y2="428.5" stroke="#777" stroke-width="1"/><line x1="67.5" y1="434.5" x2="70" y2="434.5" stroke="#777" stroke-width="1"/><line x1="67.5" y1="439.5" x2="70" y2="439.5" stroke="#777" stroke-width="1"/><line x1="67.5" y1="445.5" x2="70" y2="445.5" stroke="#777" stroke-width="1"/><line x1="67.5" y1="451.5" x2="70" y2="451.5" stroke="#777" stroke-width="1"/><line x1="61" y1="456.5" x2="70" y2="456.5" stroke="#666" stroke-width="1"/><text transform="translate(65.8 458.7) rotate(-90)" text-anchor="end" font-size="6.6" fill="#333" font-family="Liberation Sans">70</text><line x1="67.5" y1="462.5" x2="70" y2="462.5" stroke="#777" stroke-width="1"/><line x1="67.5" y1="468.5" x2="70" y2="468.5" stroke="#777" stroke-width="1"/><line x1="67.5" y1="474.5" x2="70" y2="474.5" stroke="#777" stroke-width="1"/><line x1="67.5" y1="479.5" x2="70" y2="479.5" stroke="#777" stroke-width="1"/><line x1="65.5" y1="485.5" x2="70" y2="485.5" stroke="#777" stroke-width="1"/><line x1="67.5" y1="491.5" x2="70" y2="491.5" stroke="#777" stroke-width="1"/><line x1="67.5" y1="496.5" x2="70" y2="496.5" stroke="#777" stroke-width="1"/><line x1="67.5" y1="502.5" x2="70" y2="502.5" stroke="#777" stroke-width="1"/><line x1="67.5" y1="508.5" x2="70" y2="508.5" stroke="#777" stroke-width="1"/><line x1="61" y1="514.5" x2="70" y2="514.5" stroke="#666" stroke-width="1"/><text transform="translate(65.8 516.7) rotate(-90)" text-anchor="end" font-size="6.6" fill="#333" font-family="Liberation Sans">80</text><line x1="67.5" y1="519.5" x2="70" y2="519.5" stroke="#777" stroke-width="1"/><line x1="67.5" y1="525.5" x2="70" y2="525.5" stroke="#777" stroke-width="1"/><line x1="67.5" y1="531.5" x2="70" y2="531.5" stroke="#777" stroke-width="1"/><line x1="67.5" y1="536.5" x2="70" y2="536.5" stroke="#777" stroke-width="1"/><line x1="65.5" y1="542.5" x2="70" y2="542.5" stroke="#777" stroke-width="1"/><line x1="67.5" y1="548.5" x2="70" y2="548.5" stroke="#777" stroke-width="1"/><line x1="67.5" y1="553.5" x2="70" y2="553.5" stroke="#777" stroke-width="1"/><line x1="260.5" y1="44.5" x2="260.5" y2="57" stroke="#e04040" stroke-width="1"/><line x1="57" y1="334.5" x2="70" y2="334.5" stroke="#e04040" stroke-width="1"/><circle cx="67" cy="68" r="1.8" fill="#c8e040"/><rect x="71" y="57" width="457" height="399.5" fill="#000"/><g shape-rendering="crispEdges"><line x1="72.5" y1="61" x2="72.5" y2="452" stroke="#a2a2a2"/><line x1="74.5" y1="61" x2="74.5" y2="452" stroke="#4e4e4e"/><line x1="77.5" y1="61" x2="77.5" y2="452" stroke="#4e4e4e"/><line x1="80.5" y1="61" x2="80.5" y2="452" stroke="#4e4e4e"/><line x1="83.5" y1="61" x2="83.5" y2="452" stroke="#a2a2a2"/><line x1="86.5" y1="61" x2="86.5" y2="452" stroke="#4e4e4e"/><line x1="89.5" y1="61" x2="89.5" y2="452" stroke="#4e4e4e"/><line x1="91.5" y1="61" x2="91.5" y2="452" stroke="#4e4e4e"/><line x1="94.5" y1="61" x2="94.5" y2="452" stroke="#a2a2a2"/><line x1="97.5" y1="61" x2="97.5" y2="452" stroke="#4e4e4e"/><line x1="100.5" y1="61" x2="100.5" y2="452" stroke="#4e4e4e"/><line x1="103.5" y1="61" x2="103.5" y2="452" stroke="#4e4e4e"/><line x1="106.5" y1="61" x2="106.5" y2="452" stroke="#a2a2a2"/><line x1="109.5" y1="61" x2="109.5" y2="452" stroke="#4e4e4e"/><line x1="111.5" y1="61" x2="111.5" y2="452" stroke="#4e4e4e"/><line x1="114.5" y1="61" x2="114.5" y2="452" stroke="#4e4e4e"/><line x1="117.5" y1="61" x2="117.5" y2="452" stroke="#a2a2a2"/><line x1="120.5" y1="61" x2="120.5" y2="452" stroke="#4e4e4e"/><line x1="123.5" y1="61" x2="123.5" y2="452" stroke="#4e4e4e"/><line x1="126.5" y1="61" x2="126.5" y2="452" stroke="#4e4e4e"/><line x1="129.5" y1="61" x2="129.5" y2="452" stroke="#a2a2a2"/><line x1="131.5" y1="61" x2="131.5" y2="452" stroke="#4e4e4e"/><line x1="134.5" y1="61" x2="134.5" y2="452" stroke="#4e4e4e"/><line x1="137.5" y1="61" x2="137.5" y2="452" stroke="#4e4e4e"/><line x1="140.5" y1="61" x2="140.5" y2="452" stroke="#a2a2a2"/><line x1="143.5" y1="61" x2="143.5" y2="452" stroke="#4e4e4e"/><line x1="146.5" y1="61" x2="146.5" y2="452" stroke="#4e4e4e"/><line x1="148.5" y1="61" x2="148.5" y2="452" stroke="#4e4e4e"/><line x1="151.5" y1="61" x2="151.5" y2="452" stroke="#a2a2a2"/><line x1="154.5" y1="61" x2="154.5" y2="452" stroke="#4e4e4e"/><line x1="157.5" y1="61" x2="157.5" y2="452" stroke="#4e4e4e"/><line x1="160.5" y1="61" x2="160.5" y2="452" stroke="#4e4e4e"/><line x1="163.5" y1="61" x2="163.5" y2="452" stroke="#a2a2a2"/><line x1="166.5" y1="61" x2="166.5" y2="452" stroke="#4e4e4e"/><line x1="168.5" y1="61" x2="168.5" y2="452" stroke="#4e4e4e"/><line x1="171.5" y1="61" x2="171.5" y2="452" stroke="#4e4e4e"/><line x1="174.5" y1="61" x2="174.5" y2="452" stroke="#a2a2a2"/><line x1="177.5" y1="61" x2="177.5" y2="452" stroke="#4e4e4e"/><line x1="180.5" y1="61" x2="180.5" y2="452" stroke="#4e4e4e"/><line x1="183.5" y1="61" x2="183.5" y2="452" stroke="#4e4e4e"/><line x1="186.5" y1="61" x2="186.5" y2="452" stroke="#a2a2a2"/><line x1="188.5" y1="61" x2="188.5" y2="452" stroke="#4e4e4e"/><line x1="191.5" y1="61" x2="191.5" y2="452" stroke="#4e4e4e"/><line x1="194.5" y1="61" x2="194.5" y2="452" stroke="#4e4e4e"/><line x1="197.5" y1="61" x2="197.5" y2="452" stroke="#a2a2a2"/><line x1="200.5" y1="61" x2="200.5" y2="452" stroke="#4e4e4e"/><line x1="203.5" y1="61" x2="203.5" y2="452" stroke="#4e4e4e"/><line x1="205.5" y1="61" x2="205.5" y2="452" stroke="#4e4e4e"/><line x1="208.5" y1="61" x2="208.5" y2="452" stroke="#a2a2a2"/><line x1="211.5" y1="61" x2="211.5" y2="452" stroke="#4e4e4e"/><line x1="214.5" y1="61" x2="214.5" y2="452" stroke="#4e4e4e"/><line x1="217.5" y1="61" x2="217.5" y2="452" stroke="#4e4e4e"/><line x1="220.5" y1="61" x2="220.5" y2="452" stroke="#a2a2a2"/><line x1="223.5" y1="61" x2="223.5" y2="452" stroke="#4e4e4e"/><line x1="225.5" y1="61" x2="225.5" y2="452" stroke="#4e4e4e"/><line x1="228.5" y1="61" x2="228.5" y2="452" stroke="#4e4e4e"/><line x1="231.5" y1="61" x2="231.5" y2="452" stroke="#a2a2a2"/><line x1="234.5" y1="61" x2="234.5" y2="452" stroke="#4e4e4e"/><line x1="237.5" y1="61" x2="237.5" y2="452" stroke="#4e4e4e"/><line x1="240.5" y1="61" x2="240.5" y2="452" stroke="#4e4e4e"/><line x1="243.5" y1="61" x2="243.5" y2="452" stroke="#a2a2a2"/><line x1="245.5" y1="61" x2="245.5" y2="452" stroke="#4e4e4e"/><line x1="248.5" y1="61" x2="248.5" y2="452" stroke="#4e4e4e"/><line x1="251.5" y1="61" x2="251.5" y2="452" stroke="#4e4e4e"/><line x1="254.5" y1="61" x2="254.5" y2="452" stroke="#a2a2a2"/><line x1="257.5" y1="61" x2="257.5" y2="452" stroke="#4e4e4e"/><line x1="260.5" y1="61" x2="260.5" y2="452" stroke="#4e4e4e"/><line x1="262.5" y1="61" x2="262.5" y2="452" stroke="#4e4e4e"/><line x1="265.5" y1="61" x2="265.5" y2="452" stroke="#a2a2a2"/><line x1="268.5" y1="61" x2="268.5" y2="452" stroke="#4e4e4e"/><line x1="271.5" y1="61" x2="271.5" y2="452" stroke="#4e4e4e"/><line x1="274.5" y1="61" x2="274.5" y2="452" stroke="#4e4e4e"/><line x1="277.5" y1="61" x2="277.5" y2="452" stroke="#a2a2a2"/><line x1="280.5" y1="61" x2="280.5" y2="452" stroke="#4e4e4e"/><line x1="282.5" y1="61" x2="282.5" y2="452" stroke="#4e4e4e"/><line x1="285.5" y1="61" x2="285.5" y2="452" stroke="#4e4e4e"/><line x1="288.5" y1="61" x2="288.5" y2="452" stroke="#a2a2a2"/><line x1="291.5" y1="61" x2="291.5" y2="452" stroke="#4e4e4e"/><line x1="294.5" y1="61" x2="294.5" y2="452" stroke="#4e4e4e"/><line x1="297.5" y1="61" x2="297.5" y2="452" stroke="#4e4e4e"/><line x1="300.5" y1="61" x2="300.5" y2="452" stroke="#a2a2a2"/><line x1="302.5" y1="61" x2="302.5" y2="452" stroke="#4e4e4e"/><line x1="305.5" y1="61" x2="305.5" y2="452" stroke="#4e4e4e"/><line x1="308.5" y1="61" x2="308.5" y2="452" stroke="#4e4e4e"/><line x1="311.5" y1="61" x2="311.5" y2="452" stroke="#a2a2a2"/><line x1="314.5" y1="61" x2="314.5" y2="452" stroke="#4e4e4e"/><line x1="317.5" y1="61" x2="317.5" y2="452" stroke="#4e4e4e"/><line x1="319.5" y1="61" x2="319.5" y2="452" stroke="#4e4e4e"/><line x1="322.5" y1="61" x2="322.5" y2="452" stroke="#a2a2a2"/><line x1="325.5" y1="61" x2="325.5" y2="452" stroke="#4e4e4e"/><line x1="328.5" y1="61" x2="328.5" y2="452" stroke="#4e4e4e"/><line x1="331.5" y1="61" x2="331.5" y2="452" stroke="#4e4e4e"/><line x1="334.5" y1="61" x2="334.5" y2="452" stroke="#a2a2a2"/><line x1="337.5" y1="61" x2="337.5" y2="452" stroke="#4e4e4e"/><line x1="339.5" y1="61" x2="339.5" y2="452" stroke="#4e4e4e"/><line x1="342.5" y1="61" x2="342.5" y2="452" stroke="#4e4e4e"/><line x1="345.5" y1="61" x2="345.5" y2="452" stroke="#a2a2a2"/><line x1="348.5" y1="61" x2="348.5" y2="452" stroke="#4e4e4e"/><line x1="351.5" y1="61" x2="351.5" y2="452" stroke="#4e4e4e"/><line x1="354.5" y1="61" x2="354.5" y2="452" stroke="#4e4e4e"/><line x1="357.5" y1="61" x2="357.5" y2="452" stroke="#a2a2a2"/><line x1="359.5" y1="61" x2="359.5" y2="452" stroke="#4e4e4e"/><line x1="362.5" y1="61" x2="362.5" y2="452" stroke="#4e4e4e"/><line x1="365.5" y1="61" x2="365.5" y2="452" stroke="#4e4e4e"/><line x1="368.5" y1="61" x2="368.5" y2="452" stroke="#a2a2a2"/><line x1="371.5" y1="61" x2="371.5" y2="452" stroke="#4e4e4e"/><line x1="374.5" y1="61" x2="374.5" y2="452" stroke="#4e4e4e"/><line x1="376.5" y1="61" x2="376.5" y2="452" stroke="#4e4e4e"/><line x1="379.5" y1="61" x2="379.5" y2="452" stroke="#a2a2a2"/><line x1="382.5" y1="61" x2="382.5" y2="452" stroke="#4e4e4e"/><line x1="385.5" y1="61" x2="385.5" y2="452" stroke="#4e4e4e"/><line x1="388.5" y1="61" x2="388.5" y2="452" stroke="#4e4e4e"/><line x1="391.5" y1="61" x2="391.5" y2="452" stroke="#a2a2a2"/><line x1="394.5" y1="61" x2="394.5" y2="452" stroke="#4e4e4e"/><line x1="396.5" y1="61" x2="396.5" y2="452" stroke="#4e4e4e"/><line x1="399.5" y1="61" x2="399.5" y2="452" stroke="#4e4e4e"/><line x1="402.5" y1="61" x2="402.5" y2="452" stroke="#a2a2a2"/><line x1="405.5" y1="61" x2="405.5" y2="452" stroke="#4e4e4e"/><line x1="408.5" y1="61" x2="408.5" y2="452" stroke="#4e4e4e"/><line x1="411.5" y1="61" x2="411.5" y2="452" stroke="#4e4e4e"/><line x1="414.5" y1="61" x2="414.5" y2="452" stroke="#a2a2a2"/><line x1="416.5" y1="61" x2="416.5" y2="452" stroke="#4e4e4e"/><line x1="419.5" y1="61" x2="419.5" y2="452" stroke="#4e4e4e"/><line x1="422.5" y1="61" x2="422.5" y2="452" stroke="#4e4e4e"/><line x1="425.5" y1="61" x2="425.5" y2="452" stroke="#a2a2a2"/><line x1="428.5" y1="61" x2="428.5" y2="452" stroke="#4e4e4e"/><line x1="431.5" y1="61" x2="431.5" y2="452" stroke="#4e4e4e"/><line x1="433.5" y1="61" x2="433.5" y2="452" stroke="#4e4e4e"/><line x1="436.5" y1="61" x2="436.5" y2="452" stroke="#a2a2a2"/><line x1="439.5" y1="61" x2="439.5" y2="452" stroke="#4e4e4e"/><line x1="442.5" y1="61" x2="442.5" y2="452" stroke="#4e4e4e"/><line x1="445.5" y1="61" x2="445.5" y2="452" stroke="#4e4e4e"/><line x1="448.5" y1="61" x2="448.5" y2="452" stroke="#a2a2a2"/><line x1="451.5" y1="61" x2="451.5" y2="452" stroke="#4e4e4e"/><line x1="453.5" y1="61" x2="453.5" y2="452" stroke="#4e4e4e"/><line x1="456.5" y1="61" x2="456.5" y2="452" stroke="#4e4e4e"/><line x1="459.5" y1="61" x2="459.5" y2="452" stroke="#a2a2a2"/><line x1="462.5" y1="61" x2="462.5" y2="452" stroke="#4e4e4e"/><line x1="465.5" y1="61" x2="465.5" y2="452" stroke="#4e4e4e"/><line x1="468.5" y1="61" x2="468.5" y2="452" stroke="#4e4e4e"/><line x1="471.5" y1="61" x2="471.5" y2="452" stroke="#a2a2a2"/><line x1="473.5" y1="61" x2="473.5" y2="452" stroke="#4e4e4e"/><line x1="476.5" y1="61" x2="476.5" y2="452" stroke="#4e4e4e"/><line x1="479.5" y1="61" x2="479.5" y2="452" stroke="#4e4e4e"/><line x1="482.5" y1="61" x2="482.5" y2="452" stroke="#a2a2a2"/><line x1="485.5" y1="61" x2="485.5" y2="452" stroke="#4e4e4e"/><line x1="488.5" y1="61" x2="488.5" y2="452" stroke="#4e4e4e"/><line x1="490.5" y1="61" x2="490.5" y2="452" stroke="#4e4e4e"/><line x1="493.5" y1="61" x2="493.5" y2="452" stroke="#a2a2a2"/><line x1="496.5" y1="61" x2="496.5" y2="452" stroke="#4e4e4e"/><line x1="499.5" y1="61" x2="499.5" y2="452" stroke="#4e4e4e"/><line x1="502.5" y1="61" x2="502.5" y2="452" stroke="#4e4e4e"/><line x1="505.5" y1="61" x2="505.5" y2="452" stroke="#a2a2a2"/><line x1="508.5" y1="61" x2="508.5" y2="452" stroke="#4e4e4e"/><line x1="510.5" y1="61" x2="510.5" y2="452" stroke="#4e4e4e"/><line x1="513.5" y1="61" x2="513.5" y2="452" stroke="#4e4e4e"/><line x1="516.5" y1="61" x2="516.5" y2="452" stroke="#a2a2a2"/><line x1="519.5" y1="61" x2="519.5" y2="452" stroke="#4e4e4e"/><line x1="522.5" y1="61" x2="522.5" y2="452" stroke="#4e4e4e"/><line x1="75" y1="58.5" x2="522" y2="58.5" stroke="#8e8e8e"/><line x1="75" y1="60.5" x2="522" y2="60.5" stroke="#4a4a4a"/><line x1="75" y1="63.5" x2="522" y2="63.5" stroke="#4a4a4a"/><line x1="75" y1="66.5" x2="522" y2="66.5" stroke="#4a4a4a"/><line x1="75" y1="69.5" x2="522" y2="69.5" stroke="#8e8e8e"/><line x1="75" y1="72.5" x2="522" y2="72.5" stroke="#4a4a4a"/><line x1="75" y1="75.5" x2="522" y2="75.5" stroke="#4a4a4a"/><line x1="75" y1="77.5" x2="522" y2="77.5" stroke="#4a4a4a"/><line x1="75" y1="80.5" x2="522" y2="80.5" stroke="#8e8e8e"/><line x1="75" y1="83.5" x2="522" y2="83.5" stroke="#4a4a4a"/><line x1="75" y1="86.5" x2="522" y2="86.5" stroke="#4a4a4a"/><line x1="75" y1="89.5" x2="522" y2="89.5" stroke="#4a4a4a"/><line x1="75" y1="92.5" x2="522" y2="92.5" stroke="#8e8e8e"/><line x1="75" y1="95.5" x2="522" y2="95.5" stroke="#4a4a4a"/><line x1="75" y1="97.5" x2="522" y2="97.5" stroke="#4a4a4a"/><line x1="75" y1="100.5" x2="522" y2="100.5" stroke="#4a4a4a"/><line x1="75" y1="103.5" x2="522" y2="103.5" stroke="#8e8e8e"/><line x1="75" y1="106.5" x2="522" y2="106.5" stroke="#4a4a4a"/><line x1="75" y1="109.5" x2="522" y2="109.5" stroke="#4a4a4a"/><line x1="75" y1="112.5" x2="522" y2="112.5" stroke="#4a4a4a"/><line x1="75" y1="115.5" x2="522" y2="115.5" stroke="#8e8e8e"/><line x1="75" y1="117.5" x2="522" y2="117.5" stroke="#4a4a4a"/><line x1="75" y1="120.5" x2="522" y2="120.5" stroke="#4a4a4a"/><line x1="75" y1="123.5" x2="522" y2="123.5" stroke="#4a4a4a"/><line x1="75" y1="126.5" x2="522" y2="126.5" stroke="#8e8e8e"/><line x1="75" y1="129.5" x2="522" y2="129.5" stroke="#4a4a4a"/><line x1="75" y1="132.5" x2="522" y2="132.5" stroke="#4a4a4a"/><line x1="75" y1="134.5" x2="522" y2="134.5" stroke="#4a4a4a"/><line x1="75" y1="137.5" x2="522" y2="137.5" stroke="#8e8e8e"/><line x1="75" y1="140.5" x2="522" y2="140.5" stroke="#4a4a4a"/><line x1="75" y1="143.5" x2="522" y2="143.5" stroke="#4a4a4a"/><line x1="75" y1="146.5" x2="522" y2="146.5" stroke="#4a4a4a"/><line x1="75" y1="149.5" x2="522" y2="149.5" stroke="#8e8e8e"/><line x1="75" y1="152.5" x2="522" y2="152.5" stroke="#4a4a4a"/><line x1="75" y1="154.5" x2="522" y2="154.5" stroke="#4a4a4a"/><line x1="75" y1="157.5" x2="522" y2="157.5" stroke="#4a4a4a"/><line x1="75" y1="160.5" x2="522" y2="160.5" stroke="#8e8e8e"/><line x1="75" y1="163.5" x2="522" y2="163.5" stroke="#4a4a4a"/><line x1="75" y1="166.5" x2="522" y2="166.5" stroke="#4a4a4a"/><line x1="75" y1="169.5" x2="522" y2="169.5" stroke="#4a4a4a"/><line x1="75" y1="172.5" x2="522" y2="172.5" stroke="#8e8e8e"/><line x1="75" y1="174.5" x2="522" y2="174.5" stroke="#4a4a4a"/><line x1="75" y1="177.5" x2="522" y2="177.5" stroke="#4a4a4a"/><line x1="75" y1="180.5" x2="522" y2="180.5" stroke="#4a4a4a"/><line x1="75" y1="183.5" x2="522" y2="183.5" stroke="#8e8e8e"/><line x1="75" y1="186.5" x2="522" y2="186.5" stroke="#4a4a4a"/><line x1="75" y1="189.5" x2="522" y2="189.5" stroke="#4a4a4a"/><line x1="75" y1="191.5" x2="522" y2="191.5" stroke="#4a4a4a"/><line x1="75" y1="194.5" x2="522" y2="194.5" stroke="#8e8e8e"/><line x1="75" y1="197.5" x2="522" y2="197.5" stroke="#4a4a4a"/><line x1="75" y1="200.5" x2="522" y2="200.5" stroke="#4a4a4a"/><line x1="75" y1="203.5" x2="522" y2="203.5" stroke="#4a4a4a"/><line x1="75" y1="206.5" x2="522" y2="206.5" stroke="#8e8e8e"/><line x1="75" y1="209.5" x2="522" y2="209.5" stroke="#4a4a4a"/><line x1="75" y1="211.5" x2="522" y2="211.5" stroke="#4a4a4a"/><line x1="75" y1="214.5" x2="522" y2="214.5" stroke="#4a4a4a"/><line x1="75" y1="217.5" x2="522" y2="217.5" stroke="#8e8e8e"/><line x1="75" y1="220.5" x2="522" y2="220.5" stroke="#4a4a4a"/><line x1="75" y1="223.5" x2="522" y2="223.5" stroke="#4a4a4a"/><line x1="75" y1="226.5" x2="522" y2="226.5" stroke="#4a4a4a"/><line x1="75" y1="229.5" x2="522" y2="229.5" stroke="#8e8e8e"/><line x1="75" y1="231.5" x2="522" y2="231.5" stroke="#4a4a4a"/><line x1="75" y1="234.5" x2="522" y2="234.5" stroke="#4a4a4a"/><line x1="75" y1="237.5" x2="522" y2="237.5" stroke="#4a4a4a"/><line x1="75" y1="240.5" x2="522" y2="240.5" stroke="#8e8e8e"/><line x1="75" y1="243.5" x2="522" y2="243.5" stroke="#4a4a4a"/><line x1="75" y1="246.5" x2="522" y2="246.5" stroke="#4a4a4a"/><line x1="75" y1="248.5" x2="522" y2="248.5" stroke="#4a4a4a"/><line x1="75" y1="251.5" x2="522" y2="251.5" stroke="#8e8e8e"/><line x1="75" y1="254.5" x2="522" y2="254.5" stroke="#4a4a4a"/><line x1="75" y1="257.5" x2="522" y2="257.5" stroke="#4a4a4a"/><line x1="75" y1="260.5" x2="522" y2="260.5" stroke="#4a4a4a"/><line x1="75" y1="263.5" x2="522" y2="263.5" stroke="#8e8e8e"/><line x1="75" y1="266.5" x2="522" y2="266.5" stroke="#4a4a4a"/><line x1="75" y1="268.5" x2="522" y2="268.5" stroke="#4a4a4a"/><line x1="75" y1="271.5" x2="522" y2="271.5" stroke="#4a4a4a"/><line x1="75" y1="274.5" x2="522" y2="274.5" stroke="#8e8e8e"/><line x1="75" y1="277.5" x2="522" y2="277.5" stroke="#4a4a4a"/><line x1="75" y1="280.5" x2="522" y2="280.5" stroke="#4a4a4a"/><line x1="75" y1="283.5" x2="522" y2="283.5" stroke="#4a4a4a"/><line x1="75" y1="286.5" x2="522" y2="286.5" stroke="#8e8e8e"/><line x1="75" y1="288.5" x2="522" y2="288.5" stroke="#4a4a4a"/><line x1="75" y1="291.5" x2="522" y2="291.5" stroke="#4a4a4a"/><line x1="75" y1="294.5" x2="522" y2="294.5" stroke="#4a4a4a"/><line x1="75" y1="297.5" x2="522" y2="297.5" stroke="#8e8e8e"/><line x1="75" y1="300.5" x2="522" y2="300.5" stroke="#4a4a4a"/><line x1="75" y1="303.5" x2="522" y2="303.5" stroke="#4a4a4a"/><line x1="75" y1="305.5" x2="522" y2="305.5" stroke="#4a4a4a"/><line x1="75" y1="308.5" x2="522" y2="308.5" stroke="#8e8e8e"/><line x1="75" y1="311.5" x2="522" y2="311.5" stroke="#4a4a4a"/><line x1="75" y1="314.5" x2="522" y2="314.5" stroke="#4a4a4a"/><line x1="75" y1="317.5" x2="522" y2="317.5" stroke="#4a4a4a"/><line x1="75" y1="320.5" x2="522" y2="320.5" stroke="#8e8e8e"/><line x1="75" y1="323.5" x2="522" y2="323.5" stroke="#4a4a4a"/><line x1="75" y1="325.5" x2="522" y2="325.5" stroke="#4a4a4a"/><line x1="75" y1="328.5" x2="522" y2="328.5" stroke="#4a4a4a"/><line x1="75" y1="331.5" x2="522" y2="331.5" stroke="#8e8e8e"/><line x1="75" y1="334.5" x2="522" y2="334.5" stroke="#4a4a4a"/><line x1="75" y1="337.5" x2="522" y2="337.5" stroke="#4a4a4a"/><line x1="75" y1="340.5" x2="522" y2="340.5" stroke="#4a4a4a"/><line x1="75" y1="343.5" x2="522" y2="343.5" stroke="#8e8e8e"/><line x1="75" y1="345.5" x2="522" y2="345.5" stroke="#4a4a4a"/><line x1="75" y1="348.5" x2="522" y2="348.5" stroke="#4a4a4a"/><line x1="75" y1="351.5" x2="522" y2="351.5" stroke="#4a4a4a"/><line x1="75" y1="354.5" x2="522" y2="354.5" stroke="#8e8e8e"/><line x1="75" y1="357.5" x2="522" y2="357.5" stroke="#4a4a4a"/><line x1="75" y1="360.5" x2="522" y2="360.5" stroke="#4a4a4a"/><line x1="75" y1="362.5" x2="522" y2="362.5" stroke="#4a4a4a"/><line x1="75" y1="365.5" x2="522" y2="365.5" stroke="#8e8e8e"/><line x1="75" y1="368.5" x2="522" y2="368.5" stroke="#4a4a4a"/><line x1="75" y1="371.5" x2="522" y2="371.5" stroke="#4a4a4a"/><line x1="75" y1="374.5" x2="522" y2="374.5" stroke="#4a4a4a"/><line x1="75" y1="377.5" x2="522" y2="377.5" stroke="#8e8e8e"/><line x1="75" y1="380.5" x2="522" y2="380.5" stroke="#4a4a4a"/><line x1="75" y1="382.5" x2="522" y2="382.5" stroke="#4a4a4a"/><line x1="75" y1="385.5" x2="522" y2="385.5" stroke="#4a4a4a"/><line x1="75" y1="388.5" x2="522" y2="388.5" stroke="#8e8e8e"/><line x1="75" y1="391.5" x2="522" y2="391.5" stroke="#4a4a4a"/><line x1="75" y1="394.5" x2="522" y2="394.5" stroke="#4a4a4a"/><line x1="75" y1="397.5" x2="522" y2="397.5" stroke="#4a4a4a"/><line x1="75" y1="400.5" x2="522" y2="400.5" stroke="#8e8e8e"/><line x1="75" y1="402.5" x2="522" y2="402.5" stroke="#4a4a4a"/><line x1="75" y1="405.5" x2="522" y2="405.5" stroke="#4a4a4a"/><line x1="75" y1="408.5" x2="522" y2="408.5" stroke="#4a4a4a"/><line x1="75" y1="411.5" x2="522" y2="411.5" stroke="#8e8e8e"/><line x1="75" y1="414.5" x2="522" y2="414.5" stroke="#4a4a4a"/><line x1="75" y1="417.5" x2="522" y2="417.5" stroke="#4a4a4a"/><line x1="75" y1="419.5" x2="522" y2="419.5" stroke="#4a4a4a"/><line x1="75" y1="422.5" x2="522" y2="422.5" stroke="#8e8e8e"/><line x1="75" y1="425.5" x2="522" y2="425.5" stroke="#4a4a4a"/><line x1="75" y1="428.5" x2="522" y2="428.5" stroke="#4a4a4a"/><line x1="75" y1="431.5" x2="522" y2="431.5" stroke="#4a4a4a"/><line x1="75" y1="434.5" x2="522" y2="434.5" stroke="#8e8e8e"/><line x1="75" y1="437.5" x2="522" y2="437.5" stroke="#4a4a4a"/><line x1="75" y1="439.5" x2="522" y2="439.5" stroke="#4a4a4a"/><line x1="75" y1="442.5" x2="522" y2="442.5" stroke="#4a4a4a"/><line x1="75" y1="445.5" x2="522" y2="445.5" stroke="#8e8e8e"/><line x1="75" y1="448.5" x2="522" y2="448.5" stroke="#4a4a4a"/><line x1="75" y1="451.5" x2="522" y2="451.5" stroke="#4a4a4a"/></g><path d="M71 57H528V456.5H71Z M75 61V452H522.5V61Z" fill="#12b01e" fill-rule="evenodd"/><circle cx="72.5" cy="58.5" r="1.6" fill="#2040a0"/><circle cx="165.3" cy="259.5" r="11" fill="#12b01e"/><circle cx="165.3" cy="259.5" r="0.9" fill="#053a0c"/><circle cx="164.8" cy="434.0" r="11" fill="#12b01e"/><circle cx="164.8" cy="434.0" r="0.9" fill="#053a0c"/><circle cx="492.5" cy="339.5" r="11" fill="#12b01e"/><circle cx="492.5" cy="339.5" r="0.9" fill="#053a0c"/><circle cx="492.5" cy="433.8" r="11" fill="#12b01e"/><circle cx="492.5" cy="433.8" r="0.9" fill="#053a0c"/><circle cx="467.6" cy="239.7" r="8.3" fill="#12b01e"/><circle cx="467.6" cy="239.7" r="0.9" fill="#053a0c"/><circle cx="467.5" cy="314.2" r="8.3" fill="#12b01e"/><circle cx="467.5" cy="314.2" r="0.9" fill="#053a0c"/><path d="M315.5 238.0 L315.5 169.6 L500.5 169.6 L500.5 271.5 L453.5 271.5" fill="none" stroke="#12b01e" stroke-width="7" stroke-linecap="round" stroke-linejoin="round"/><path d="M329.8 238.0 L329.8 188.0 L486.8 188.0 L486.8 258.7 L453.5 258.7" fill="none" stroke="#12b01e" stroke-width="7" stroke-linecap="round" stroke-linejoin="round"/><path d="M344.2 238.0 L344.2 205.8 L440.6 205.8 L440.6 283.2 L454.3 283.2" fill="none" stroke="#12b01e" stroke-width="7" stroke-linecap="round" stroke-linejoin="round"/><path d="M359.2 238.0 L359.2 222.8 L425.0 222.8 L425.0 297.0 L454.3 297.0" fill="none" stroke="#12b01e" stroke-width="7" stroke-linecap="round" stroke-linejoin="round"/><path d="M286.0 238.2 L278.6 238.6 L278.6 281.5" fill="none" stroke="#12b01e" stroke-width="4" stroke-linecap="round" stroke-linejoin="round"/><path d="M388.3 237.8 L395.0 240.0 L395.0 289.0" fill="none" stroke="#12b01e" stroke-width="4" stroke-linecap="round" stroke-linejoin="round"/><path d="M293.5 269.0 L293.5 282.0" fill="none" stroke="#12b01e" stroke-width="7" stroke-linecap="round" stroke-linejoin="round"/><path d="M322.6 269.0 L322.6 282.0" fill="none" stroke="#12b01e" stroke-width="7" stroke-linecap="round" stroke-linejoin="round"/><path d="M351.2 269.0 L351.2 282.0" fill="none" stroke="#12b01e" stroke-width="7" stroke-linecap="round" stroke-linejoin="round"/><path d="M307.4 269.0 L307.4 303.6" fill="none" stroke="#12b01e" stroke-width="7" stroke-linecap="round" stroke-linejoin="round"/><path d="M373.2 238.0 L380.0 264.0 L380.0 303.6" fill="none" stroke="#12b01e" stroke-width="7" stroke-linecap="round" stroke-linejoin="round"/><path d="M365.5 268.0 L380.0 268.0" fill="none" stroke="#12b01e" stroke-width="7" stroke-linecap="round" stroke-linejoin="round"/><path d="M260.5 303.6 L382.4 303.6" fill="none" stroke="#12b01e" stroke-width="7" stroke-linecap="round" stroke-linejoin="round"/><path d="M110.9 296.7 L253.0 296.7 L261.0 303.6" fill="none" stroke="#12b01e" stroke-width="7" stroke-linecap="round" stroke-linejoin="round"/><circle cx="110.9" cy="296.7" r="8" fill="#12b01e"/><circle cx="110.9" cy="296.7" r="0.9" fill="#053a0c"/><path d="M111.0 325.0 L352.5 325.0" fill="none" stroke="#12b01e" stroke-width="7" stroke-linecap="round" stroke-linejoin="round"/><path d="M352.5 325.0 L404.5 325.0 L435.0 355.0 L435.0 422.0" fill="none" stroke="#12b01e" stroke-width="3.2" stroke-linecap="round" stroke-linejoin="round"/><path d="M382.0 303.6 L404.5 303.6 L450.1 348.0 L450.1 422.0" fill="none" stroke="#12b01e" stroke-width="3.2" stroke-linecap="round" stroke-linejoin="round"/><circle cx="111.0" cy="325.0" r="8" fill="#12b01e"/><circle cx="111.0" cy="325.0" r="0.9" fill="#053a0c"/><circle cx="435.0" cy="422.0" r="2.6" fill="#12b01e"/><circle cx="450.1" cy="422.0" r="2.6" fill="#12b01e"/><line x1="293.5" y1="287" x2="293.5" y2="322" stroke="#b02020" stroke-width="0.9"/><line x1="322.6" y1="287" x2="322.6" y2="322" stroke="#b02020" stroke-width="0.9"/><line x1="351.2" y1="287" x2="351.2" y2="322" stroke="#b02020" stroke-width="0.9"/><path d="M105.6 325.0 L105.6 390.2 L243.0 390.2" fill="none" stroke="#12b01e" stroke-width="4.2" stroke-linecap="round" stroke-linejoin="round"/><circle cx="105.6" cy="390.2" r="3.8" fill="#12b01e"/><path d="M136.7 362.1 L136.7 376.6 L250.0 376.6 L278.8 376.6" fill="none" stroke="#12b01e" stroke-width="4.2" stroke-linecap="round" stroke-linejoin="round"/><circle cx="136.7" cy="362.1" r="4" fill="#12b01e"/><circle cx="136.7" cy="376.6" r="4" fill="#12b01e"/><path d="M136.7 420.2 L136.7 404.3 L202.3 404.3 L233.9 436.3 L282.4 436.3 L297.0 421.7" fill="none" stroke="#12b01e" stroke-width="4.2" stroke-linecap="round" stroke-linejoin="round"/><circle cx="136.7" cy="404.3" r="4" fill="#12b01e"/><circle cx="136.7" cy="420.2" r="4" fill="#12b01e"/><path d="M278.8 376.6 L297.0 394.0" fill="none" stroke="#12b01e" stroke-width="4.2" stroke-linecap="round" stroke-linejoin="round"/><path d="M276.3 394.0 L276.3 402.7 L314.0 402.7 L314.0 368.5 L278.8 368.5" fill="none" stroke="#12b01e" stroke-width="4.2" stroke-linecap="round" stroke-linejoin="round"/><circle cx="276.3" cy="394.0" r="4" fill="#12b01e"/><circle cx="297.0" cy="394.0" r="4" fill="#12b01e"/><path d="M253.2 394.0 L253.2 422.2" fill="none" stroke="#12b01e" stroke-width="4.2" stroke-linecap="round" stroke-linejoin="round"/><circle cx="253.2" cy="394.0" r="4" fill="#12b01e"/><circle cx="253.2" cy="422.2" r="4" fill="#12b01e"/><path d="M276.3 422.2 L276.3 411.2 L352.0 411.2 L397.0 367.3" fill="none" stroke="#12b01e" stroke-width="4.2" stroke-linecap="round" stroke-linejoin="round"/><circle cx="276.3" cy="422.2" r="4" fill="#12b01e"/><circle cx="297.0" cy="421.7" r="4" fill="#12b01e"/><circle cx="278.6" cy="281.5" r="2.4" fill="#12b01e"/><circle cx="395.0" cy="289.0" r="2.4" fill="#12b01e"/><path d="M90.5 348.5L121 378.5M119 352.5L91 378" stroke="#e02030" stroke-width="4.2" stroke-linecap="round"/><path d="M309.8 326 L309.5 332 C309 340 300 344 288 348.5 C272 354 258 362 253 372 C249.5 380 246 386 243.5 391.7" fill="none" stroke="#c8e438" stroke-width="5.8" stroke-linecap="round" stroke-linejoin="round"/><rect x="304.2" y="321.2" width="11.4" height="9.7" rx="3.5" fill="#c8e438"/><rect x="237.5" y="386.8" width="11.4" height="9.7" rx="3.5" fill="#c8e438"/><circle cx="261" cy="325" r="0.8" fill="#064a10"/><circle cx="293.5" cy="325" r="0.8" fill="#064a10"/><circle cx="322.5" cy="325" r="0.8" fill="#064a10"/><circle cx="338" cy="325" r="0.8" fill="#064a10"/><circle cx="168" cy="296.7" r="0.8" fill="#064a10"/><circle cx="210" cy="296.7" r="0.8" fill="#064a10"/><circle cx="168" cy="325" r="0.8" fill="#064a10"/><circle cx="210" cy="325" r="0.8" fill="#064a10"/><path d="M232 407.5h6.5v10" fill="none" stroke="#12a020" stroke-width="1" opacity=".8"/><text x="470.8" y="295.7" font-size="12.15" textLength="23.2" lengthAdjust="spacingAndGlyphs" fill="#14a822" stroke="#14a822" opacity=".9" stroke-width="0.3" font-family="Liberation Sans">TUO</text><text x="105.6" y="420.2" font-size="19.13" textLength="13.7" lengthAdjust="spacingAndGlyphs" fill="#14a822" stroke="#14a822" opacity=".9" stroke-width="0.2" font-family="Liberation Sans">И0</text><text x="252.8" y="287" font-size="15.36" textLength="13.7" lengthAdjust="spacingAndGlyphs" fill="#14a822" stroke="#14a822" opacity=".9" stroke-width="0.0" font-family="Liberation Sans">S3</text><text x="198.2" y="315.5" font-size="16.06" textLength="13.7" lengthAdjust="spacingAndGlyphs" fill="#14a822" stroke="#14a822" opacity=".9" stroke-width="0.0" font-family="Liberation Sans">R3</text><text x="272.5" y="346.8" font-size="12.99" textLength="14.5" lengthAdjust="spacingAndGlyphs" fill="#14a822" stroke="#14a822" opacity=".9" stroke-width="0.0" font-family="Liberation Sans">R1</text><text x="391" y="345.8" font-size="14.53" textLength="13.6" lengthAdjust="spacingAndGlyphs" fill="#14a822" stroke="#14a822" opacity=".9" stroke-width="0.0" font-family="Liberation Sans">D1</text><text x="432" y="444" font-size="13.55" textLength="18.0" lengthAdjust="spacingAndGlyphs" fill="#14a822" stroke="#14a822" opacity=".9" stroke-width="0.0" font-family="Liberation Sans">ЬЭl</text><path d="M86.5 297h10M91.5 293v8.5" stroke="#12a020" stroke-width="1.5"/><circle cx="91.5" cy="297" r="2.3" fill="#12a020"/><path d="M88 325h8" stroke="#12a020" stroke-width="1.8"/></svg>
<div class="a" style="left:57px;top:554px;width:515px;height:1.5px;background:#9a9a9a"></div>
<div class="a" style="left:57px;top:555.5px;width:515px;height:12px;background:#f0f0f0"></div>
<div class="a" style="left:57px;top:554px;width:40px;height:11px;"><svg width="40" height="11"><path d="M1 0.5 L4 9.5 H33 L37 0.5" fill="#fff" stroke="#777" stroke-width="1"/></svg></div>
<div class="t" style="left:64.80px;top:555.36px;font-size:7.40px;color:#111;transform:scaleX(0.905);transform-origin:0 0;">Plaine 1</div>
<div class="a" style="left:572px;top:44px;width:69px;height:524px;background:#f0f0f0"></div>
<div class="a" style="left:640.5px;top:44px;width:1.5px;height:524px;background:repeating-linear-gradient(180deg,#c8c8c8 0 1px,#f0f0f0 1px 2px)"></div>
<div class="a" style="left:574px;top:46px;width:54px;height:9px;background:#000"></div>
<div class="t" style="left:576.40px;top:45.70px;font-size:8.40px;color:#a8b4e0;font-weight:bold;transform:scaleX(0.822);transform-origin:0 0;">Свойства</div>
<div class="a" style="left:628px;top:45.8px;width:9px;height:9.2px;background:#f4f4f4;border:1px solid #909090"></div>
<div class="a" style="left:629px;top:47px;width:7px;height:7px"><svg width="7" height="7"><path d="M1 1l5 5M6 1l-5 5" stroke="#000" stroke-width="1.3"/></svg></div>
<div class="t" style="left:576.00px;top:64.93px;font-size:7.80px;color:#111;font-weight:bold;transform:scaleX(0.906);transform-origin:0 0;">Плата</div>
<div class="a" style="left:574px;top:75px;width:63px;height:1px;background:#c4c4c4"></div>
<div class="t" style="left:577.00px;top:81.36px;font-size:7.40px;color:#141414;transform:scaleX(0.853);transform-origin:0 0;">Ширина:</div>
<div class="t" style="left:577.00px;top:105.61px;font-size:7.40px;color:#141414;transform:scaleX(0.867);transform-origin:0 0;">Высота:</div>
<div class="t" style="left:577.00px;top:130.36px;font-size:7.40px;color:#141414;transform:scaleX(0.880);transform-origin:0 0;">Название:</div>
<div class="a" style="left:577px;top:91.1px;width:26px;height:8.5px;background:#000"></div>
<div class="t" style="left:585.20px;top:91.17px;font-size:8.00px;color:#c8cc48;transform:scaleX(0.809);transform-origin:0 0;">80.00</div>
<div class="a" style="left:605.5px;top:92.85px;width:3px;height:5px;background:#555;border-radius:1px"></div>
<div class="t" style="left:612.50px;top:92.21px;font-size:6.50px;color:#333;transform:scaleX(1.018);transform-origin:0 0;">мм</div>
<div class="a" style="left:577px;top:115px;width:26px;height:8.799999999999997px;background:#000"></div>
<div class="t" style="left:585.20px;top:115.22px;font-size:8.00px;color:#c8cc48;transform:scaleX(0.809);transform-origin:0 0;">70.00</div>
<div class="a" style="left:605.5px;top:116.9px;width:3px;height:5px;background:#555;border-radius:1px"></div>
<div class="t" style="left:612.50px;top:116.26px;font-size:6.50px;color:#333;transform:scaleX(1.018);transform-origin:0 0;">мм</div>
<div class="a" style="left:577px;top:140.3px;width:51.7px;height:11.1px;background:#fff;border:1px solid #8a8a8a;border-right-color:#e4e4e4;border-bottom-color:#e4e4e4"></div>
<div class="t" style="left:578.70px;top:141.83px;font-size:7.80px;color:#111;transform:scaleX(0.830);transform-origin:0 0;">Plaine 1</div>
<div class="a" style="left:577px;top:160.5px;width:6.5px;height:6.5px;background:#fff;border:1px solid #8a8a8a;border-right-color:#e0e0e0;border-bottom-color:#e0e0e0"></div>
<div class="t" style="left:587.80px;top:159.56px;font-size:7.40px;color:#141414;transform:scaleX(0.892);transform-origin:0 0;">Многослойная</div>
<div class="a" style="left:642px;top:44px;width:127px;height:524px;background:#f0f0f0"></div>
<div class="a" style="left:642px;top:45.8px;width:116.7px;height:9px;background:#000"></div>
<div class="t" style="left:684.70px;top:45.80px;font-size:8.40px;color:#d01818;font-weight:bold;transform:scaleX(0.830);transform-origin:0 0;">Библиотека</div>
<div class="a" style="left:758.7px;top:45.8px;width:9px;height:9.2px;background:#f4f4f4;border:1px solid #909090"></div>
<div class="a" style="left:759.7px;top:47px;width:7px;height:7px"><svg width="7" height="7"><path d="M1 1l5 5M6 1l-5 5" stroke="#000" stroke-width="1.3"/></svg></div>
<div class="a" style="left:642.8px;top:58.3px;width:124.6px;height:347.2px;background:#fff;border-top:1.5px solid #a8a8a8;border-left:1.5px solid #a8a8a8"></div>
<div class="a" style="left:645.5px;top:61.4px;width:5px;height:5px;border:1px solid #8a8a8a;background:#fff"></div>
<div class="a" style="left:646.5px;top:63.4px;width:3px;height:1px;background:#000"></div>
<div class="a" style="left:647.5px;top:62.4px;width:1px;height:3px;background:#000"></div>
<div class="a" style="left:650.5px;top:63.4px;width:3px;height:1px;background:#999"></div>
<div class="t" style="left:655.00px;top:59.64px;font-size:7.60px;color:#141414;transform:scaleX(0.781);transform-origin:0 0;">PCB</div>
<div class="a" style="left:645.5px;top:71.1px;width:5px;height:5px;border:1px solid #8a8a8a;background:#fff"></div>
<div class="a" style="left:646.5px;top:73.1px;width:3px;height:1px;background:#000"></div>
<div class="a" style="left:647.5px;top:72.1px;width:1px;height:3px;background:#000"></div>
<div class="a" style="left:650.5px;top:73.1px;width:3px;height:1px;background:#999"></div>
<div class="t" style="left:655.00px;top:69.34px;font-size:7.60px;color:#141414;transform:scaleX(0.829);transform-origin:0 0;">SHM</div>
<div class="a" style="left:647.5px;top:66.5px;width:1px;height:4.5px;background:#bbb"></div>
<div class="a" style="left:645px;top:409px;width:9px;height:10px"><svg width="9" height="10" viewBox="0 0 9 10"><rect x="0" y="0" width="9" height="10" fill="#1a2a90"/><rect x="2" y="0.5" width="5" height="4" fill="#fff"/><rect x="2.5" y="6.5" width="4" height="3.5" fill="#aab"/></svg></div>
<div class="a" style="left:659px;top:409px;width:8px;height:10px"><svg width="8" height="10" viewBox="0 0 8 10"><rect x="1" y="2.5" width="6" height="7.5" fill="#555"/><rect x="0" y="1" width="8" height="1.8" fill="#555"/><rect x="2.5" y="0" width="3" height="1.5" fill="#555"/></svg></div>
<div class="a" style="left:727px;top:409px;width:9px;height:10px"><svg width="9" height="10" viewBox="0 0 9 10"><circle cx="4.5" cy="5" r="4.5" fill="#141414"/><circle cx="4.5" cy="5" r="2" fill="#b82020"/></svg></div>
<div class="a" style="left:742px;top:409px;width:9px;height:10px"><svg width="9" height="10" viewBox="0 0 9 10"><path d="M1 0v10M4 0v10M4 5 Q4 1 8 0" fill="none" stroke="#141414" stroke-width="1.2"/></svg></div>
<div class="a" style="left:755px;top:408px;width:11px;height:12px"><svg width="11" height="12" viewBox="0 0 11 12"><path d="M3 10V1M1 3l2-2 2 2" fill="none" stroke="#1a3aa0" stroke-width="1.2"/><text x="5" y="11" font-size="7" font-weight="bold" fill="#2a9a3a" font-family="Liberation Sans">2</text></svg></div>
<div class="a" style="left:642px;top:424.3px;width:127px;height:1px;background:repeating-linear-gradient(90deg,#b0b0b0 0 1px,#f0f0f0 1px 2px)"></div>
<div class="a" style="left:643px;top:426px;width:124px;height:18px;background:#fff"></div>
<div class="a" style="left:642.5px;top:444px;width:123.5px;height:120px;background:#000"></div>
<div class="t" style="left:692.60px;top:555.88px;font-size:7.00px;color:#d4d4d4;transform:scaleX(0.955);transform-origin:0 0;">Нажать и перетянуть</div>
<div class="a" style="left:0;top:567.5px;width:769px;height:1px;background:#c4c4c4"></div>
<div class="a" style="left:0;top:568.5px;width:769px;height:22px;background:#f0f0f0"></div>
<div class="a" style="left:0.5px;top:569.5px;width:45px;height:19.5px;border:1px solid #d4d4d4;border-right-color:#fafafa;border-bottom-color:#fafafa"></div>
<div class="a" style="left:47px;top:569.5px;width:95px;height:19.5px;border:1px solid #d4d4d4;border-right-color:#fafafa;border-bottom-color:#fafafa"></div>
<div class="a" style="left:143px;top:569.5px;width:23px;height:19.5px;border:1px solid #d4d4d4;border-right-color:#fafafa;border-bottom-color:#fafafa"></div>
<div class="a" style="left:168.7px;top:569.5px;width:600px;height:19.5px;border:1px solid #d4d4d4;border-right-color:#fafafa;border-bottom-color:#fafafa"></div>
<div class="t" style="left:3.50px;top:571.08px;font-size:7.00px;color:#141414;transform:scaleX(0.711);transform-origin:0 0;">X:</div>
<div class="t" style="left:3.50px;top:580.88px;font-size:7.00px;color:#141414;transform:scaleX(0.755);transform-origin:0 0;">Y:</div>
<div class="t" style="left:14.50px;top:570.97px;font-size:7.20px;color:#141414;transform:scaleX(0.783);transform-origin:0 0;">33.09</div>
<div class="t" style="left:14.50px;top:580.77px;font-size:7.20px;color:#141414;transform:scaleX(0.783);transform-origin:0 0;">48.58</div>
<div class="t" style="left:30.90px;top:572.03px;font-size:6.20px;color:#141414;transform:scaleX(1.314);transform-origin:0 0;">мм</div>
<div class="t" style="left:30.90px;top:581.83px;font-size:6.20px;color:#141414;transform:scaleX(1.314);transform-origin:0 0;">мм</div>
<div class="t" style="left:51.00px;top:571.80px;font-size:6.60px;color:#141414;transform:scaleX(0.910);transform-origin:0 0;">видим.</div>
<div class="t" style="left:51.00px;top:581.60px;font-size:6.60px;color:#141414;transform:scaleX(0.964);transform-origin:0 0;">актив.</div>
<div class="a" style="left:75px;top:569.6px;width:56px;height:10px;background:#000"></div>
<div class="t" style="left:75.40px;top:570.21px;font-size:8.20px;color:#e02020;font-weight:bold;transform:scaleX(0.781);transform-origin:0 0;">M1</div>
<div class="t" style="left:87.80px;top:570.21px;font-size:8.20px;color:#ffffff;font-weight:bold;transform:scaleX(0.782);transform-origin:0 0;">K1</div>
<div class="t" style="left:98.30px;top:570.21px;font-size:8.20px;color:#20c020;font-weight:bold;transform:scaleX(0.860);transform-origin:0 0;">M2</div>
<div class="t" style="left:109.60px;top:570.21px;font-size:8.20px;color:#ffffff;font-weight:bold;transform:scaleX(0.935);transform-origin:0 0;">K2</div>
<div class="t" style="left:122.90px;top:570.21px;font-size:8.20px;color:#e8e020;transform:scaleX(0.930);transform-origin:0 0;">Ф</div>
<div class="a" style="left:76px;top:581.8px;width:6.5px;height:6.5px;border-radius:50%;border:1px solid #6a6a6a;border-right-color:#d0d0d0;border-bottom-color:#d0d0d0;background:#fff"></div>
<div class="a" style="left:86.5px;top:581.8px;width:6.5px;height:6.5px;border-radius:50%;border:1px solid #6a6a6a;border-right-color:#d0d0d0;border-bottom-color:#d0d0d0;background:#fff"></div>
<div class="a" style="left:98px;top:581.8px;width:6.5px;height:6.5px;border-radius:50%;border:1px solid #6a6a6a;border-right-color:#d0d0d0;border-bottom-color:#d0d0d0;background:#fff"></div>
<div class="a" style="left:100px;top:584px;width:2.2px;height:2.2px;border-radius:50%;background:#111"></div>
<div class="a" style="left:110px;top:581.8px;width:6.5px;height:6.5px;border-radius:50%;border:1px solid #6a6a6a;border-right-color:#d0d0d0;border-bottom-color:#d0d0d0;background:#fff"></div>
<div class="a" style="left:121px;top:581.8px;width:6.5px;height:6.5px;border-radius:50%;border:1px solid #6a6a6a;border-right-color:#d0d0d0;border-bottom-color:#d0d0d0;background:#fff"></div>
<div class="t" style="left:134.00px;top:575.90px;font-size:7.50px;color:#333;transform:scaleX(1.079);transform-origin:0 0;">?</div>
<div class="a" style="left:145.5px;top:571px;width:17.5px;height:16.5px;background:#a0a0a0;border:1px solid #808080"></div>
<div class="a" style="left:146px;top:572px;width:16px;height:15px"><svg width="16" height="15" viewBox="0 0 16 15"><path d="M1.5 4h4.5l5.5 5.5" fill="none" stroke="#111" stroke-width="2.2"/><circle cx="12" cy="10.5" r="2" fill="#fff" stroke="#111" stroke-width="1.5"/></svg></div>
<div class="t" style="left:171.50px;top:571.27px;font-size:7.20px;color:#1c1c78;transform:scaleX(0.908);transform-origin:0 0;">Курсор: Выделение, перемещение, копирование, вставка и удаление.</div>
<div class="t" style="left:171.50px;top:578.77px;font-size:7.20px;color:#1c1c78;transform:scaleX(0.907);transform-origin:0 0;">&lt;Колесико&gt; = Масштаб</div>
<div class="a" style="left:0;top:590.5px;width:769px;height:24.5px;background:linear-gradient(90deg,#3a5f7c 0%,#3e6079 30%,#3a5a74 50%,#2c4864 70%,#213852 85%,#1e324c 100%)"></div>
<div class="a" style="left:0;top:590.5px;width:769px;height:24.5px;background:linear-gradient(180deg,rgba(255,255,255,.12) 0%,rgba(255,255,255,.03) 40%,rgba(0,0,0,.08) 100%)"></div>
<div class="a" style="left:0;top:590.5px;width:769px;height:1px;background:#1a2838"></div>
<div class="a" style="left:0;top:591.5px;width:769px;height:1px;background:rgba(160,190,210,.35)"></div>
<div class="a" style="left:4.7px;top:592px;width:23.3px;height:22px;border-radius:50%;background:radial-gradient(circle at 50% 35%,#b0e0ff 0%,#4a9ad0 35%,#1a5a90 70%,#0c2a44 100%);box-shadow:0 0 2px #8cf"></div>
<div class="a" style="left:10.5px;top:597px;width:12px;height:12px"><svg width="12" height="12" viewBox="0 0 12 12"><path d="M0 1.8l5.3-1v5H0z" fill="#f05a28"/><path d="M6 0.7l6-.7v5.8H6z" fill="#7cc840"/><path d="M0 6.5h5.3v5l-5.3-1z" fill="#28a0f0"/><path d="M6 6.5h6V12l-6-.7z" fill="#f8c020"/></svg></div>
<div class="a" style="left:36.4px;top:592px;width:34.3px;height:21.5px;border:1px solid rgba(20,30,40,.55);box-shadow:inset 0 0 0 1px rgba(255,255,255,.22);border-radius:2px;background:linear-gradient(180deg,rgba(255,255,255,.42),rgba(255,255,255,.25) 50%,rgba(255,255,255,.18))"></div>
<div class="a" style="left:73.3px;top:592px;width:34.7px;height:21.5px;border:1px solid rgba(20,30,40,.55);box-shadow:inset 0 0 0 1px rgba(255,255,255,.22);border-radius:2px;background:linear-gradient(180deg,rgba(255,255,255,.28),rgba(255,255,255,.12) 50%,rgba(255,255,255,.08))"></div>
<div class="a" style="left:110.5px;top:592px;width:34.5px;height:21.5px;border:1px solid rgba(20,30,40,.55);box-shadow:inset 0 0 0 1px rgba(255,255,255,.22);border-radius:2px;background:linear-gradient(180deg,rgba(255,255,255,.28),rgba(255,255,255,.12) 50%,rgba(255,255,255,.08))"></div>
<div class="a" style="left:147.7px;top:592px;width:34.3px;height:21.5px;border:1px solid rgba(20,30,40,.55);box-shadow:inset 0 0 0 1px rgba(255,255,255,.22);border-radius:2px;background:linear-gradient(180deg,rgba(255,255,255,.28),rgba(255,255,255,.12) 50%,rgba(255,255,255,.08))"></div>
<div class="a" style="left:44.5px;top:594px;width:18px;height:17px"><svg width="18" height="17" viewBox="0 0 18 17"><path d="M1 2.5h6l1.5 1.5H17v12H1z" fill="#d8b048"/><rect x="2.5" y="5" width="13" height="3" fill="#f4f4f4"/><path d="M0.5 7.5h17l-1 8.5h-15z" fill="#f2d27a"/><rect x="4" y="9.5" width="10" height="5" fill="#8ac4e8"/><rect x="5" y="12" width="8" height="2.5" fill="#f2d27a"/></svg></div>
<div class="a" style="left:82px;top:594px;width:17px;height:17px"><svg width="17" height="17" viewBox="0 0 17 17"><rect x="0.5" y="0.5" width="16" height="16" fill="#bcd8ee" stroke="#8ab"/><circle cx="8.5" cy="8.5" r="5.5" fill="#f07818"/><path d="M6.8 5.5l5 3-5 3z" fill="#fff"/></svg></div>
<div class="a" style="left:119px;top:594px;width:18px;height:18px"><svg width="18" height="18" viewBox="0 0 18 18"><circle cx="9" cy="9" r="8.5" fill="#dd3030"/><path d="M9 9 L16.4 4.75 A8.5 8.5 0 0 1 9 17.5z" fill="#f0c020"/><path d="M9 9 L9 17.5 A8.5 8.5 0 0 1 1.6 4.75z" fill="#30a040"/><circle cx="9" cy="9" r="4.2" fill="#fff"/><circle cx="9" cy="9" r="3.2" fill="#3a74d8"/></svg></div>
<div class="a" style="left:155px;top:593.5px;width:18px;height:18px"><svg width="18" height="18" viewBox="0 0 18 18"><rect x="5" y="0.5" width="4" height="9" fill="#8a8a8a" stroke="#444" stroke-width=".7"/><circle cx="7" cy="12.5" r="4.2" fill="#8a8a8a" stroke="#444" stroke-width=".7"/><circle cx="7" cy="12.5" r="1.2" fill="#333"/><rect x="11" y="10.5" width="6" height="4" fill="#8a8a8a" stroke="#444" stroke-width=".7"/></svg></div>
<div class="t" style="left:512.20px;top:596.78px;font-size:7.00px;color:#e8eef8;transform:scaleX(0.905);transform-origin:0 0;">EN</div>
<div class="a" style="left:530.9px;top:599px;width:9px;height:8px"><svg width="9" height="8" viewBox="0 0 9 8"><rect x="0" y="0" width="9" height="8" fill="#e8e8e8"/><path d="M0 0h6l-2 4 3 4H0z" fill="#d82828"/><rect x="5" y="5" width="4" height="3" fill="#333"/></svg></div>
<div class="a" style="left:545px;top:600px;width:10px;height:7px"><svg width="10" height="7" viewBox="0 0 10 7"><rect x="0" y="0" width="9.5" height="6.5" fill="#3aa838"/><text x="1" y="5.5" font-size="5" fill="#fff" font-family="Liberation Sans" font-weight="bold">ovl</text></svg></div>
<div class="a" style="left:559.8px;top:599px;width:9px;height:8px"><svg width="9" height="8" viewBox="0 0 9 8"><rect x="0" y="0" width="8.6" height="8" rx="1.8" fill="#f4f4f4"/><text x="2" y="6.8" font-size="6.5" fill="#2a4a80" font-family="Liberation Sans" font-weight="bold">B</text></svg></div>
<div class="a" style="left:573px;top:598.5px;width:10px;height:9px"><svg width="10" height="9" viewBox="0 0 10 9"><circle cx="3" cy="2.5" r="2.5" fill="#a020a8"/><path d="M4 4l5 4M5 8l4-4M7 5v4" stroke="#f0f0f0" stroke-width="1.3"/></svg></div>
<div class="a" style="left:588.6px;top:598.5px;width:9px;height:9px"><svg width="9" height="9" viewBox="0 0 9 9"><rect x="1" y="0" width="3.5" height="8.5" fill="#999"/><path d="M4 6l2 2.5 3-5" fill="none" stroke="#3ac040" stroke-width="1.6"/></svg></div>
<div class="a" style="left:603.5px;top:598.5px;width:9px;height:9px"><svg width="9" height="9" viewBox="0 0 9 9"><rect x="0" y="1" width="8.5" height="8" fill="#5a90c8"/><rect x="2" y="0" width="6" height="4" fill="#e0c040"/><rect x="1" y="5" width="4" height="3" fill="#a8d8f0"/></svg></div>
<div class="a" style="left:616.7px;top:598px;width:10px;height:10px"><svg width="10" height="10" viewBox="0 0 10 10"><circle cx="4.7" cy="4.8" r="4.6" fill="#2a78e0"/><circle cx="4.7" cy="4.8" r="3.4" fill="#f0f4ff"/><path d="M5.5 1.5l-2.5 3.5h2l-1 3.5 3-4h-2z" fill="#2a78e0"/></svg></div>
<div class="a" style="left:632.5px;top:599px;width:8px;height:8px"><svg width="8" height="8" viewBox="0 0 8 8"><path d="M0 1l8 6M1 7l7-6M4 3v5" stroke="#f0f0f0" stroke-width="1.5"/></svg></div>
<div class="a" style="left:646.3px;top:598.5px;width:7px;height:9px"><svg width="7" height="9" viewBox="0 0 7 9"><path d="M6 0v9L0 5z" fill="#e04828"/></svg></div>
<div class="a" style="left:660.7px;top:598.5px;width:9px;height:9px"><svg width="9" height="9" viewBox="0 0 9 9"><rect x="0" y="0" width="5" height="8" fill="#f0f0f0"/><circle cx="6" cy="6" r="3" fill="#d83030"/><path d="M4.8 4.8l2.4 2.4M7.2 4.8l-2.4 2.4" stroke="#fff" stroke-width=".8"/></svg></div>
<div class="a" style="left:675.2px;top:599px;width:9px;height:8px"><svg width="9" height="8" viewBox="0 0 9 8"><path d="M0 4C2 0 7 0 9 2v5C6 8 2 8 0 4z" fill="#58b030"/></svg></div>
<div class="a" style="left:689.7px;top:598.5px;width:9px;height:9px"><svg width="9" height="9" viewBox="0 0 9 9"><rect x="1" y="1" width="7" height="6.5" fill="none" stroke="#f0f0f0" stroke-width="1.2"/><rect x="0" y="0" width="3" height="2.5" fill="#f0f0f0"/><rect x="3" y="7.5" width="3" height="1.5" fill="#f0f0f0"/></svg></div>
<div class="a" style="left:704.1px;top:598.5px;width:9px;height:9px"><svg width="9" height="9" viewBox="0 0 9 9"><path d="M0 3h2l3-3v9l-3-3H0z" fill="#f0f0f0"/><path d="M6 2.5q1.5 2 0 4M7.2 1q2.5 3.5 0 7" fill="none" stroke="#f0f0f0" stroke-width=".8"/></svg></div>
<div class="t" style="left:725.80px;top:593.84px;font-size:7.60px;color:#f0f4fa;transform:scaleX(0.894);transform-origin:0 0;">2:41 PM</div>
<div class="t" style="left:723.10px;top:604.04px;font-size:7.60px;color:#f0f4fa;transform:scaleX(0.924);transform-origin:0 0;">7/22/2011</div>
<div class="a" style="left:760px;top:591px;width:9px;height:24px;background:linear-gradient(90deg,#4a6080,#7088a8);border-left:1px solid #8aa0c0"></div>
</div></body></html>
